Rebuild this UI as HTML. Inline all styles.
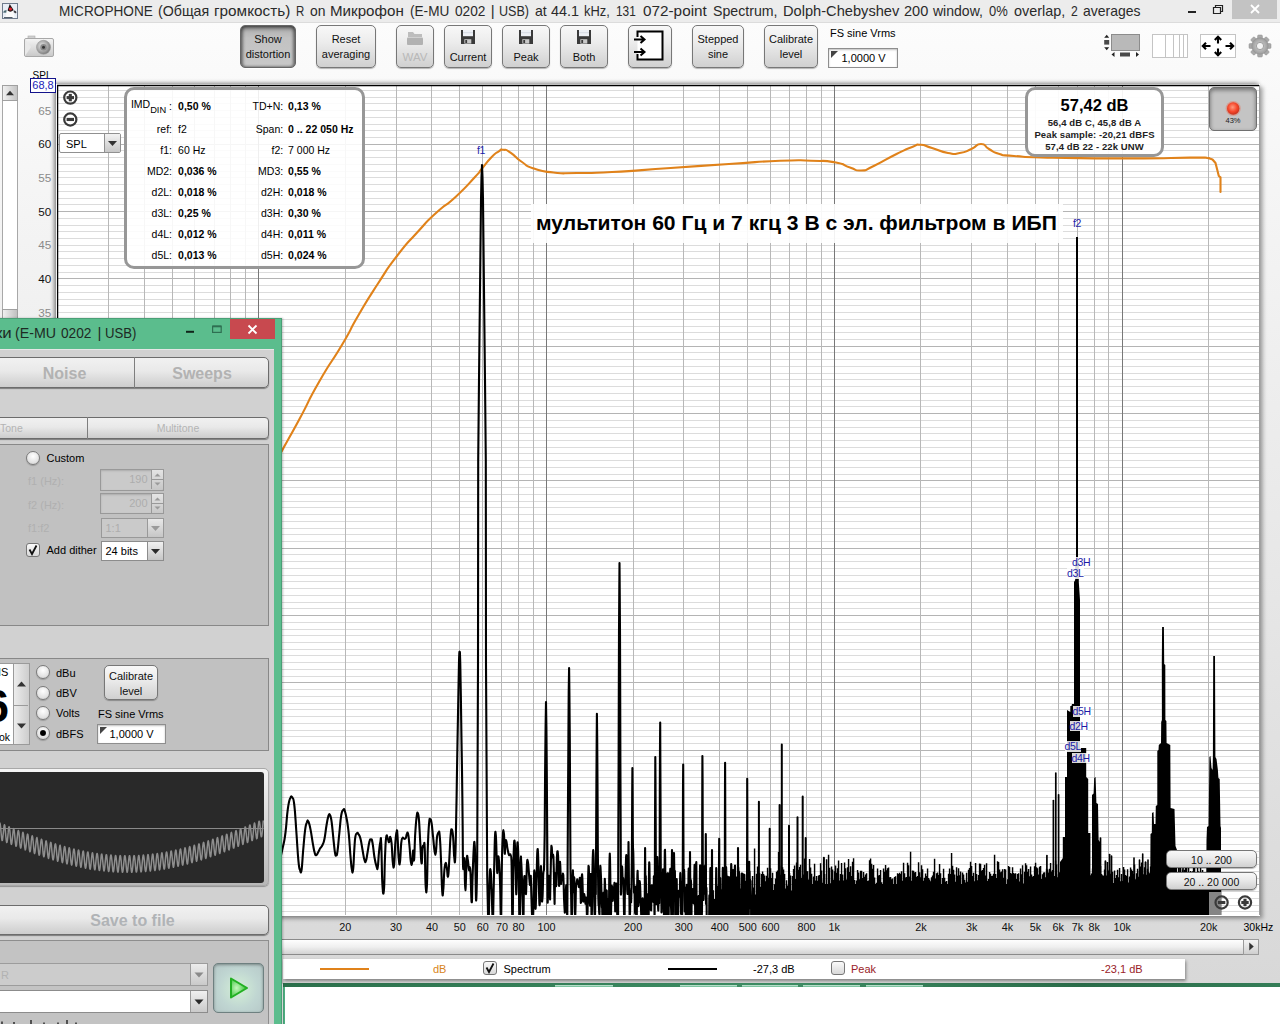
<!DOCTYPE html>
<html><head><meta charset="utf-8"><title>REW</title><style>
*{box-sizing:border-box;margin:0;padding:0}
html,body{width:1280px;height:1024px;overflow:hidden;background:#fff}
body{font-family:"Liberation Sans",sans-serif;font-size:12px;color:#000;position:relative}
div{position:absolute}
.t{white-space:nowrap;line-height:1}
.btn{border:1px solid #777;border-radius:5px;background:linear-gradient(#f8f8f8,#ececec 40%,#dedede 70%,#d0d0d0);box-shadow:0 1px 1px rgba(0,0,0,.28);text-align:center;font-size:11px;line-height:15px;color:#111}
.btn.sel{background:linear-gradient(#adadad,#c2c2c2 30%,#c8c8c8);border-color:#666;box-shadow:inset 0 2px 4px rgba(0,0,0,.55),inset 2px 0 3px rgba(0,0,0,.28),inset -2px 0 3px rgba(0,0,0,.28),0 1px 0 rgba(255,255,255,.9)}
.btn.dis{color:#b8b8b8}
.bl{position:absolute;left:0;right:0;text-align:center;white-space:nowrap}
.rad{width:14px;height:14px;border-radius:50%;border:1px solid #7a7a7a;background:radial-gradient(circle at 50% 35%,#fff,#e4e4e4 60%,#cfcfcf);box-shadow:0 1px 1px rgba(0,0,0,.2)}
.chk{width:14px;height:14px;border-radius:3px;border:1px solid #777;background:linear-gradient(#fafafa,#d8d8d8)}
.field{background:#fff;border:1px solid #8e8e8e;box-shadow:inset 0 1px 2px rgba(0,0,0,.25)}
.combo{border:1px solid #909090;border-radius:2px;background:#fff}
.cbtn{border-left:1px solid #909090;background:linear-gradient(#f2f2f2,#c8c8c8)}
.yl{right:1228.7px;font-size:11.7px}
.xl{font-size:10.8px;transform:translateX(-50%);top:922.8px;color:#111}
.lab{font-size:10.5px;color:#1c1ca8;letter-spacing:-0.3px}
</style></head><body><div style="left:0px;top:22px;width:1280px;height:962px;background:linear-gradient(#fcfcfc,#f4f4f4 20%,#e6e6e6 60%,#d8d8d8)"></div>
<div style="left:0px;top:0px;width:1280px;height:22.5px;background:#ececec;border-bottom:1px solid #dcdcdc"></div>
<div class="t" style="left:58.75px;top:3.2px;font-size:15px;color:#2a2a2a;transform-origin:0 0;transform:scaleX(0.9076)">MICROPHONE</div>
<div class="t" style="left:157.5px;top:3.2px;font-size:15px;color:#2a2a2a;transform-origin:0 0;transform:scaleX(0.9473)">(Общая</div>
<div class="t" style="left:213.75px;top:3.2px;font-size:15px;color:#2a2a2a;transform-origin:0 0;transform:scaleX(1.0207)">громкость)</div>
<div class="t" style="left:296.25px;top:3.2px;font-size:15px;color:#2a2a2a;transform-origin:0 0;transform:scaleX(0.7639)">R</div>
<div class="t" style="left:309.5px;top:3.2px;font-size:15px;color:#2a2a2a;transform-origin:0 0;transform:scaleX(0.9281)">on</div>
<div class="t" style="left:330px;top:3.2px;font-size:15px;color:#2a2a2a;transform-origin:0 0;transform:scaleX(1.0089)">Микрофон</div>
<div class="t" style="left:409.5px;top:3.2px;font-size:15px;color:#2a2a2a;transform-origin:0 0;transform:scaleX(0.9065)">(E-MU</div>
<div class="t" style="left:454.5px;top:3.2px;font-size:15px;color:#2a2a2a;transform-origin:0 0;transform:scaleX(0.9132)">0202</div>
<div class="t" style="left:490.7px;top:3.2px;font-size:15px;color:#2a2a2a;transform-origin:0 0;transform:scaleX(1)">|</div>
<div class="t" style="left:498.75px;top:3.2px;font-size:15px;color:#2a2a2a;transform-origin:0 0;transform:scaleX(0.838)">USB)</div>
<div class="t" style="left:534.5px;top:3.2px;font-size:15px;color:#2a2a2a;transform-origin:0 0;transform:scaleX(0.94)">at</div>
<div class="t" style="left:551.25px;top:3.2px;font-size:15px;color:#2a2a2a;transform-origin:0 0;transform:scaleX(0.9589)">44.1</div>
<div class="t" style="left:584.25px;top:3.2px;font-size:15px;color:#2a2a2a;transform-origin:0 0;transform:scaleX(0.8583)">kHz,</div>
<div class="t" style="left:615.75px;top:3.2px;font-size:15px;color:#2a2a2a;transform-origin:0 0;transform:scaleX(0.79)">131</div>
<div class="t" style="left:642.5px;top:3.2px;font-size:15px;color:#2a2a2a;transform-origin:0 0;transform:scaleX(1.02)">072-point</div>
<div class="t" style="left:712.5px;top:3.2px;font-size:15px;color:#2a2a2a;transform-origin:0 0;transform:scaleX(0.943)">Spectrum,</div>
<div class="t" style="left:782.5px;top:3.2px;font-size:15px;color:#2a2a2a;transform-origin:0 0;transform:scaleX(0.9753)">Dolph-Chebyshev</div>
<div class="t" style="left:903.75px;top:3.2px;font-size:15px;color:#2a2a2a;transform-origin:0 0;transform:scaleX(0.97)">200</div>
<div class="t" style="left:933.09px;top:3.2px;font-size:15px;color:#2a2a2a;transform-origin:0 0;transform:scaleX(0.9346)">window,</div>
<div class="t" style="left:989.25px;top:3.2px;font-size:15px;color:#2a2a2a;transform-origin:0 0;transform:scaleX(0.8641)">0%</div>
<div class="t" style="left:1013.75px;top:3.2px;font-size:15px;color:#2a2a2a;transform-origin:0 0;transform:scaleX(0.9597)">overlap,</div>
<div class="t" style="left:1070.75px;top:3.2px;font-size:15px;color:#2a2a2a;transform-origin:0 0;transform:scaleX(0.8133)">2</div>
<div class="t" style="left:1083px;top:3.2px;font-size:15px;color:#2a2a2a;transform-origin:0 0;transform:scaleX(0.9319)">averages</div>
<div style="left:1232px;top:0px;width:45px;height:19px;background:#c3c3c3"></div>
<div style="left:0px;top:984px;width:1280px;height:40px;background:#fff"></div>
<div style="left:283px;top:983px;width:997px;height:4px;background:linear-gradient(90deg,#2b6f4b,#37835b 30%,#3f8e65 50%,#2a6c49 80%,#347d57)"></div>
<div style="left:555px;top:985px;width:58px;height:2px;background:#7dc3a0;border-top:1px solid #b5dcc8"></div>
<div style="left:680px;top:985px;width:57px;height:2px;background:#7dc3a0;border-top:1px solid #b5dcc8"></div>
<div style="left:742px;top:985px;width:56px;height:2px;background:#7dc3a0;border-top:1px solid #b5dcc8"></div>
<div style="left:803px;top:985px;width:57px;height:2px;background:#7dc3a0;border-top:1px solid #b5dcc8"></div>
<div style="left:866px;top:985px;width:57px;height:2px;background:#7dc3a0;border-top:1px solid #b5dcc8"></div>
<div style="left:283px;top:987px;width:2px;height:37px;background:#4fae82"></div>
<svg style="position:absolute;left:0;top:0" width="1280" height="1024" viewBox="0 0 1280 1024"><rect x="2.5" y="3.5" width="15" height="15" fill="#e9eef5" stroke="#6f7b8c"/><path d="M3.5 11.5Q5 9.5 7 10.5L6.5 13Q5 12 3.5 13Z" fill="#4a6a72"/><path d="M13.5 10.5Q15.5 10 16.5 12L16 13.5Q15 12.5 13.5 12.5Z" fill="#3a3a40"/><path d="M6.7 10.5H13.3L14.5 17.5H5.5Z" fill="#fbfbfb"/><path d="M9.7 4L13.6 10Q10.5 13 7.6 10.6Z" fill="#1e1416"/><circle cx="10.4" cy="9" r="1.6" fill="#e0202c"/><path d="M4 17H12L13 18H4Z" fill="#55606c"/><path d="M1188 12H1196" stroke="#222" stroke-width="2"/><path d="M1213.5 7.5H1220.5V13.5H1213.5Z M1215.5 7.5V5.5H1222.5V11.5H1220.5" stroke="#222" stroke-width="1.2" fill="none"/><path d="M1251 5L1259 13M1259 5L1251 13" stroke="#fff" stroke-width="1.8"/><defs><linearGradient id="cg" x1="0" y1="0" x2="0" y2="1"><stop offset="0" stop-color="#f4f4f4"/><stop offset="1" stop-color="#c9c9c9"/></linearGradient><radialGradient id="lens" cx="0.4" cy="0.4" r="0.7"><stop offset="0" stop-color="#e8e8e8"/><stop offset="0.55" stop-color="#a8a8a8"/><stop offset="1" stop-color="#6a6a6a"/></radialGradient><radialGradient id="red" cx="0.45" cy="0.4" r="0.6"><stop offset="0" stop-color="#ff9a80"/><stop offset="0.6" stop-color="#f6482c"/><stop offset="1" stop-color="#c8321c"/></radialGradient><radialGradient id="gear" cx="0.5" cy="0.5" r="0.5"><stop offset="0" stop-color="#d8d8d8"/><stop offset="1" stop-color="#9c9c9c"/></radialGradient></defs><rect x="28" y="36" width="7" height="3" fill="#d0d0d0" stroke="#aaa" stroke-width=".6"/><rect x="24.5" y="38.5" width="29" height="18" rx="1.5" fill="url(#cg)" stroke="#a8a8a8"/><path d="M25 39L31 47L25 56Z" fill="#e9e9e9"/><circle cx="43.5" cy="47.3" r="7" fill="url(#lens)" stroke="#999" stroke-width=".6"/><circle cx="43.5" cy="47.3" r="3.2" fill="#8a8a8a"/><circle cx="43.5" cy="47.3" r="1.5" fill="#333"/><rect x="1111.5" y="34.5" width="28" height="16" fill="#b9b9b9" stroke="#8c8c8c"/><rect x="1104.2" y="40" width="5" height="4.6" fill="#4a4a4a"/><polygon points="1104.2,37.8 1109.2,37.8 1106.7,34.8" fill="#222"/><polygon points="1104.2,47.2 1109.2,47.2 1106.7,50.2" fill="#222"/><rect x="1120" y="52.5" width="10" height="4" fill="#4a4a4a"/><polygon points="1114.5,52 1114.5,57 1111.5,54.5" fill="#222"/><polygon points="1136,52 1136,57 1139,54.5" fill="#222"/><rect x="1152.5" y="34.5" width="35" height="23" fill="#fff" stroke="#c4c4c4"/><path d="M1165.5 35V57M1173.5 35V57M1179.5 35V57M1183.5 35V57" stroke="#c4c4c4"/><rect x="1200.5" y="34.5" width="35" height="23" fill="#fff" stroke="#c4c4c4"/><path d="M1203 46H1210.5M1225.5 46H1233M1218 37V43.5M1218 48.5V55" stroke="#000" stroke-width="2.1"/><path d="M1206 42.8L1202.8 46L1206 49.2M1230 42.8L1233.2 46L1230 49.2M1214.8 40L1218 36.8L1221.2 40M1214.8 52L1218 55.2L1221.2 52" stroke="#000" stroke-width="2.1" fill="none"/><g transform="translate(1260,46)"><rect x="-2.4" y="-11" width="4.8" height="6" rx="1" fill="#a9a9a9" stroke="#8f8f8f" stroke-width=".5" transform="rotate(0)"/><rect x="-2.4" y="-11" width="4.8" height="6" rx="1" fill="#a9a9a9" stroke="#8f8f8f" stroke-width=".5" transform="rotate(45)"/><rect x="-2.4" y="-11" width="4.8" height="6" rx="1" fill="#a9a9a9" stroke="#8f8f8f" stroke-width=".5" transform="rotate(90)"/><rect x="-2.4" y="-11" width="4.8" height="6" rx="1" fill="#a9a9a9" stroke="#8f8f8f" stroke-width=".5" transform="rotate(135)"/><rect x="-2.4" y="-11" width="4.8" height="6" rx="1" fill="#a9a9a9" stroke="#8f8f8f" stroke-width=".5" transform="rotate(180)"/><rect x="-2.4" y="-11" width="4.8" height="6" rx="1" fill="#a9a9a9" stroke="#8f8f8f" stroke-width=".5" transform="rotate(225)"/><rect x="-2.4" y="-11" width="4.8" height="6" rx="1" fill="#a9a9a9" stroke="#8f8f8f" stroke-width=".5" transform="rotate(270)"/><rect x="-2.4" y="-11" width="4.8" height="6" rx="1" fill="#a9a9a9" stroke="#8f8f8f" stroke-width=".5" transform="rotate(315)"/><circle r="8.2" fill="url(#gear)" stroke="#909090" stroke-width=".6"/><circle r="3.6" fill="#f4f4f4" stroke="#909090" stroke-width=".8"/></g></svg>
<div class="btn sel" style="left:240px;top:25.2px;width:56px;height:42.6px;"><div class="bl" style="top:5.9px">Show</div><div class="bl" style="top:20.9px">distortion</div></div>
<div class="btn" style="left:316px;top:25.2px;width:60px;height:42.6px;"><div class="bl" style="top:5.9px">Reset</div><div class="bl" style="top:20.9px">averaging</div></div>
<div class="btn dis" style="left:396px;top:25.2px;width:38px;height:42.6px;"><div class="bl" style="top:23.7px;font-size:11.5px">WAV</div></div>
<div class="btn" style="left:444px;top:25.2px;width:48px;height:42.6px;"><div class="bl" style="top:23.7px">Current</div></div>
<div class="btn" style="left:502px;top:25.2px;width:48px;height:42.6px;"><div class="bl" style="top:23.7px">Peak</div></div>
<div class="btn" style="left:560px;top:25.2px;width:48px;height:42.6px;"><div class="bl" style="top:23.7px">Both</div></div>
<div class="btn" style="left:628px;top:25.2px;width:44px;height:42.6px;"></div>
<div class="btn" style="left:692px;top:25.2px;width:52px;height:42.6px;"><div class="bl" style="top:5.9px">Stepped</div><div class="bl" style="top:20.9px">sine</div></div>
<div class="btn" style="left:764px;top:25.2px;width:54px;height:42.6px;"><div class="bl" style="top:5.9px">Calibrate</div><div class="bl" style="top:20.9px">level</div></div>
<svg style="position:absolute;left:0;top:0" width="1280" height="1024" viewBox="0 0 1280 1024"><g transform="translate(461,30)"><path d="M0 0H14V14H0Z" fill="#3a3a3a"/><rect x="2" y="0" width="10" height="6.2" fill="#eef1f6"/><rect x="2" y="2.2" width="10" height="1" fill="#d5dae3"/><rect x="3.3" y="9.2" width="7" height="4.4" fill="#c9c9c9"/><rect x="4.3" y="10" width="1.8" height="3" fill="#3a3a3a"/></g><g transform="translate(519,30)"><path d="M0 0H14V14H0Z" fill="#3a3a3a"/><rect x="2" y="0" width="10" height="6.2" fill="#eef1f6"/><rect x="2" y="2.2" width="10" height="1" fill="#d5dae3"/><rect x="3.3" y="9.2" width="7" height="4.4" fill="#c9c9c9"/><rect x="4.3" y="10" width="1.8" height="3" fill="#3a3a3a"/></g><g transform="translate(577,30)"><path d="M0 0H14V14H0Z" fill="#3a3a3a"/><rect x="2" y="0" width="10" height="6.2" fill="#eef1f6"/><rect x="2" y="2.2" width="10" height="1" fill="#d5dae3"/><rect x="3.3" y="9.2" width="7" height="4.4" fill="#c9c9c9"/><rect x="4.3" y="10" width="1.8" height="3" fill="#3a3a3a"/></g><path d="M408 32H413L414.5 34H422V37H408Z" fill="#bdbdbd"/><rect x="407" y="37.5" width="16" height="7.5" rx="1" fill="#b2b2b2"/><rect x="637.5" y="31.5" width="25" height="28" fill="#fff"/><path d="M637.5 37V31.5H662.5V59.5H637.5V54" stroke="#000" stroke-width="2" fill="none"/><path d="M634 39.5H644M634 52H644M640.5 36L644.5 39.5L640.5 43M640.5 48.5L644.5 52L640.5 55.5" stroke="#000" stroke-width="2" fill="none"/></svg>
<div class="t" style="left:830px;top:27.5px;font-size:11px">FS sine Vrms</div>
<div class="field" style="left:828px;top:47.5px;width:70px;height:20.5px;"><svg width="8" height="8" style="position:absolute;left:2px;top:2px"><path d="M0 0H7L0 7Z" fill="#444"/></svg><div class="t" style="left:12.5px;top:4.5px;font-size:11px">1,0000 V</div></div>
<div style="left:2px;top:85px;width:16px;height:240px;background:#fff;border:1px solid #a8a8a8"></div>
<div style="left:2px;top:85px;width:16px;height:16px;background:linear-gradient(90deg,#f0f0f0,#c4c4c4);border:1px solid #a0a0a0"><svg width="14" height="14"><polygon points="3,9.25 11,9.25 7,4.75" fill="#333"/></svg></div>
<div style="left:2px;top:309px;width:16px;height:12px;background:linear-gradient(90deg,#f0f0f0,#c0c0c0);border:1px solid #a0a0a0"></div>
<div class="t yl" style="left:0px;top:104.685px;left:auto;color:#8a8a8a">65</div>
<div class="t yl" style="left:0px;top:138.35px;left:auto;color:#111">60</div>
<div class="t yl" style="left:0px;top:172.015px;left:auto;color:#8a8a8a">55</div>
<div class="t yl" style="left:0px;top:205.68px;left:auto;color:#111">50</div>
<div class="t yl" style="left:0px;top:239.345px;left:auto;color:#8a8a8a">45</div>
<div class="t yl" style="left:0px;top:273.01px;left:auto;color:#111">40</div>
<div class="t yl" style="left:0px;top:306.675px;left:auto;color:#8a8a8a">35</div>
<div class="t" style="left:32.6px;top:70.6px;font-size:10px">SPL</div>
<div style="left:56px;top:84px;width:1204px;height:832px;background:#fff;box-shadow:-2px -1px 4px rgba(0,0,0,.45),3px 3px 4px rgba(0,0,0,.3)"></div>
<svg style="position:absolute;left:0;top:0" width="1280" height="1024" viewBox="0 0 1280 1024"><path d="M57 90.5H1259M57 97.5H1259M57 103.5H1259M57 110.5H1259M57 117.5H1259M57 124.5H1259M57 130.5H1259M57 137.5H1259M57 150.5H1259M57 157.5H1259M57 164.5H1259M57 171.5H1259M57 177.5H1259M57 184.5H1259M57 191.5H1259M57 198.5H1259M57 204.5H1259M57 218.5H1259M57 225.5H1259M57 231.5H1259M57 238.5H1259M57 245.5H1259M57 251.5H1259M57 258.5H1259M57 265.5H1259M57 272.5H1259M57 285.5H1259M57 292.5H1259M57 299.5H1259M57 305.5H1259M57 312.5H1259M57 319.5H1259M57 326.5H1259M57 332.5H1259M57 339.5H1259M57 352.5H1259M57 359.5H1259M57 366.5H1259M57 373.5H1259M57 379.5H1259M57 386.5H1259M57 393.5H1259M57 400.5H1259M57 406.5H1259M57 420.5H1259M57 427.5H1259M57 433.5H1259M57 440.5H1259M57 447.5H1259M57 453.5H1259M57 460.5H1259M57 467.5H1259M57 474.5H1259M57 487.5H1259M57 494.5H1259M57 501.5H1259M57 507.5H1259M57 514.5H1259M57 521.5H1259M57 528.5H1259M57 534.5H1259M57 541.5H1259M57 554.5H1259M57 561.5H1259M57 568.5H1259M57 575.5H1259M57 581.5H1259M57 588.5H1259M57 595.5H1259M57 602.5H1259M57 608.5H1259M57 622.5H1259M57 629.5H1259M57 635.5H1259M57 642.5H1259M57 649.5H1259M57 655.5H1259M57 662.5H1259M57 669.5H1259M57 676.5H1259M57 689.5H1259M57 696.5H1259M57 703.5H1259M57 709.5H1259M57 716.5H1259M57 723.5H1259M57 730.5H1259M57 736.5H1259M57 743.5H1259M57 756.5H1259M57 763.5H1259M57 770.5H1259M57 777.5H1259M57 783.5H1259M57 790.5H1259M57 797.5H1259M57 804.5H1259M57 810.5H1259M57 824.5H1259M57 831.5H1259M57 837.5H1259M57 844.5H1259M57 851.5H1259M57 857.5H1259M57 864.5H1259M57 871.5H1259M57 878.5H1259M57 891.5H1259M57 898.5H1259M57 905.5H1259M57 911.5H1259" stroke="#dcdcdc" stroke-width="1" fill="none"/>
<path d="M57 144.5H1259M57 211.5H1259M57 278.5H1259M57 346.5H1259M57 413.5H1259M57 480.5H1259M57 548.5H1259M57 615.5H1259M57 682.5H1259M57 750.5H1259M57 817.5H1259M57 884.5H1259" stroke="#b4b4b4" stroke-width="1" fill="none"/>
<path d="M108.5 85V915M144.5 85V915M172.5 85V915M194.5 85V915M214.5 85V915M230.5 85V915M245.5 85V915M345.5 85V915M396.5 85V915M431.5 85V915M459.5 85V915M482.5 85V915M501.5 85V915M518.5 85V915M533.5 85V915M633.5 85V915M683.5 85V915M719.5 85V915M747.5 85V915M770.5 85V915M789.5 85V915M806.5 85V915M821.5 85V915M920.5 85V915M971.5 85V915M1007.5 85V915M1035.5 85V915M1058.5 85V915M1077.5 85V915M1094.5 85V915M1108.5 85V915M1208.5 85V915" stroke="#b8b8b8" stroke-width="1" fill="none"/>
<path d="M258.5 85V915M546.5 85V915M834.5 85V915M1122.5 85V915" stroke="#787878" stroke-width="1" fill="none"/><path d="M57 85.5H1259" stroke="#000" stroke-width="1.4"/><path d="M57.6 85V915" stroke="#000" stroke-width="1.3"/><path d="M1259.5 85V915" stroke="#a0a0a0"/><clipPath id="pc"><rect x="57" y="85" width="1202" height="830"/></clipPath><g clip-path="url(#pc)"><path d="M270.0 475.0C273.3 468.2 270.2 473.2 280.0 454.5C289.8 435.8 286.5 443.2 299.5 419.0C312.5 394.8 304.7 407.0 319.0 382.0C333.3 357.0 329.5 366.0 342.5 344.0C355.5 322.0 346.3 336.0 358.0 316.0C369.7 296.0 364.7 304.0 377.7 284.0C390.7 264.0 384.0 273.0 397.0 256.0C410.0 239.0 403.7 247.3 416.7 233.0C429.7 218.7 423.0 225.1 436.0 213.0C449.0 200.9 442.8 208.7 455.8 196.7C468.8 184.7 466.4 186.2 475.0 177.0C483.6 167.8 476.3 175.4 481.6 169.0C486.9 162.6 485.3 163.6 491.0 157.7C496.7 151.8 494.7 153.9 498.8 151.3C502.9 148.7 499.5 149.4 503.4 149.8C507.3 150.2 504.3 148.5 510.5 152.6C516.7 156.7 514.2 156.7 522.0 162.0C529.8 167.3 523.5 165.1 534.0 168.6C544.5 172.1 539.1 171.0 553.4 172.5C567.7 174.0 557.5 173.2 577.0 173.0C596.5 172.8 580.8 173.7 612.0 172.0C643.2 170.3 631.6 170.7 670.6 168.0C709.6 165.3 692.5 166.4 729.0 164.0C765.5 161.6 752.7 161.9 780.0 160.8C807.3 159.7 792.8 160.3 811.0 160.8C829.2 161.3 821.7 160.1 834.7 162.3C847.7 164.5 841.2 164.7 850.0 167.4C858.8 170.1 853.1 171.0 861.0 170.5C868.9 170.0 861.7 171.6 873.7 166.0C885.7 160.4 884.0 160.1 897.0 153.7C910.0 147.3 904.9 149.7 912.8 146.7C920.7 143.7 914.2 144.4 920.6 144.8C927.0 145.2 922.9 145.3 932.0 148.0C941.1 150.7 938.8 151.3 948.0 153.0C957.2 154.7 951.9 154.3 959.7 153.0C967.5 151.7 964.3 152.0 971.4 149.0C978.5 146.0 975.1 144.0 981.0 144.0C986.9 144.0 983.1 145.8 989.0 149.0C994.9 152.2 990.4 151.4 998.7 153.7C1007.0 156.0 995.9 154.7 1014.0 156.0C1032.1 157.3 1013.8 156.8 1053.0 157.6C1092.2 158.4 1085.8 158.4 1131.5 158.4C1177.2 158.4 1164.2 157.7 1190.0 157.6C1215.8 157.5 1202.7 158.0 1209.0 158.2" stroke="#e0821a" stroke-width="2.1" fill="none" stroke-linecap="round" stroke-linejoin="round"/><path d="M1209.0 158.2L1212.5 159.5L1215.5 163.0L1217.3 170.0L1218.8 176.0L1220.5 177.4L1220.5 192.0" stroke="#e0821a" stroke-width="2.1" fill="none" stroke-linecap="round" stroke-linejoin="round"/><path d="M272.0 880.0C273.2 877.5 274.3 878.2 277.0 870.0C279.7 861.8 280.7 856.7 282.8 847.3C284.9 838.0 284.2 842.1 285.5 832.5C286.7 822.9 286.6 817.7 287.8 809.1C289.0 800.5 289.0 800.9 290.2 798.1C291.3 795.3 291.4 795.9 292.5 797.8C293.6 799.8 293.4 797.3 294.4 805.9C295.4 814.6 295.4 818.8 296.4 832.5C297.4 846.2 297.5 851.2 298.4 860.6C299.3 870.0 299.2 867.7 300.0 870.0C300.8 872.3 300.8 874.4 301.6 869.7C302.3 865.0 302.3 860.9 303.1 851.2C304.0 841.6 304.1 838.2 305.0 830.9C305.9 823.7 306.0 824.7 306.9 822.3C307.7 820.0 307.5 819.8 308.4 821.6C309.3 823.3 309.4 823.9 310.5 829.4C311.6 834.8 311.8 837.6 312.8 843.4C313.9 849.3 313.8 849.9 314.7 852.8C315.5 855.7 315.4 855.4 316.2 855.2C317.1 855.0 317.3 853.8 318.3 852.0C319.3 850.3 319.3 849.9 320.3 848.1C321.4 846.4 321.4 847.3 322.5 845.0C323.6 842.7 323.5 843.8 324.5 838.8C325.5 833.7 325.6 830.4 326.6 824.7C327.5 819.0 327.6 818.5 328.4 816.1C329.3 813.7 329.2 813.6 330.0 815.0C330.8 816.4 330.7 815.6 331.6 821.6C332.4 827.5 332.6 830.9 333.4 838.8C334.3 846.6 334.3 848.7 335.0 852.8C335.7 856.9 335.6 855.5 336.2 855.2C336.9 854.8 336.7 856.9 337.5 851.2C338.3 845.6 338.4 841.5 339.4 832.5C340.3 823.5 340.3 821.0 341.2 815.3C342.2 809.6 342.4 810.9 343.3 809.8C344.2 808.8 343.9 808.4 344.8 810.9C345.7 813.5 345.9 814.2 346.9 820.0C347.9 825.8 347.8 824.7 348.8 834.1C349.7 843.4 349.8 848.6 350.6 857.5C351.4 866.4 351.2 866.6 351.9 869.7C352.5 872.7 352.5 874.3 353.1 869.7C353.7 865.1 353.7 859.4 354.2 851.2C354.8 843.1 354.6 841.7 355.3 837.2C356.0 832.7 356.1 834.1 356.9 833.3C357.7 832.5 357.5 832.7 358.4 834.1C359.3 835.4 359.5 834.8 360.5 838.8C361.5 842.7 361.5 844.4 362.5 849.7C363.5 855.0 363.5 857.0 364.4 859.8C365.2 862.7 365.2 862.7 365.9 860.9C366.7 859.2 366.6 857.6 367.5 852.8C368.4 848.0 368.5 845.2 369.4 841.9C370.2 838.6 370.2 839.3 370.9 839.5C371.7 839.7 371.6 838.2 372.5 842.7C373.4 847.1 373.5 851.5 374.5 857.5C375.5 863.5 375.7 864.2 376.6 866.6C377.4 868.9 377.2 870.7 377.8 866.9C378.4 863.0 378.4 857.4 379.1 851.2C379.7 845.1 379.8 844.1 380.3 842.2C380.9 840.2 380.7 833.4 381.2 843.4C381.8 853.5 381.7 870.8 382.3 882.5C383.0 894.2 383.2 896.6 383.9 890.3C384.6 884.1 384.4 870.8 385.0 857.5C385.6 844.2 385.5 841.9 386.2 837.2C387.0 832.5 387.1 837.5 387.8 838.8C388.5 840.0 388.4 842.7 389.1 842.2C389.7 841.7 389.7 836.6 390.3 836.9C390.9 837.2 390.9 837.1 391.6 843.4C392.2 849.8 392.2 856.8 392.8 862.2C393.4 867.6 393.4 869.7 394.1 865.0C394.7 860.3 394.7 851.8 395.3 843.4C395.9 835.1 396.0 833.7 396.6 831.7C397.1 829.8 397.0 828.8 397.5 835.6C398.0 842.5 398.1 852.5 398.8 859.1C399.4 865.6 399.4 865.8 400.0 861.9C400.6 858.0 400.6 849.4 401.2 843.4C401.9 837.5 401.8 839.1 402.5 838.0C403.2 836.8 403.4 838.8 404.2 838.8C405.0 838.8 405.1 839.2 405.8 838.0C406.4 836.7 406.3 834.7 406.9 833.8C407.5 832.8 407.5 831.2 408.1 834.1C408.8 836.9 408.7 838.0 409.4 845.0C410.1 852.0 410.2 857.9 410.9 862.2C411.6 866.5 411.6 865.1 412.2 862.2C412.7 859.3 412.7 851.1 413.1 850.5C413.6 849.9 413.5 864.3 414.1 859.8C414.6 855.4 414.6 843.4 415.3 832.5C416.0 821.6 416.1 820.8 416.7 816.1C417.4 811.4 417.4 812.4 418.0 813.8C418.6 815.1 418.5 814.1 419.1 821.6C419.6 829.0 419.7 833.0 420.3 843.4C420.9 853.9 421.0 862.3 421.6 863.4C422.1 864.6 422.0 852.3 422.5 848.1C423.0 843.9 423.2 846.8 423.8 846.6C424.3 846.4 424.2 837.8 424.7 847.3C425.2 856.9 425.1 875.2 425.6 884.8C426.2 894.5 426.3 895.1 426.9 885.9C427.4 876.8 427.3 863.8 427.8 848.1C428.4 832.4 428.4 830.2 429.1 823.1C429.7 816.0 429.7 819.7 430.3 819.7C430.9 819.7 430.9 818.8 431.6 823.1C432.3 827.5 432.3 830.0 433.1 837.2C433.9 844.4 434.0 848.3 434.7 852.0C435.4 855.7 435.4 855.7 435.9 852.0C436.5 848.3 436.4 842.1 437.0 837.2C437.7 832.3 437.9 832.9 438.6 832.5C439.3 832.1 439.1 829.4 439.7 835.6C440.3 841.9 440.3 843.6 440.9 857.5C441.6 871.4 441.6 883.1 442.2 891.1C442.8 899.1 442.7 894.8 443.3 889.5C443.8 884.3 443.8 876.6 444.4 870.0C445.0 863.4 445.0 863.4 445.6 863.0C446.2 862.6 446.2 865.1 446.9 868.4C447.5 871.8 447.5 879.0 448.1 876.2C448.8 873.5 448.8 867.7 449.4 857.5C450.0 847.3 450.0 842.7 450.6 835.6C451.2 828.6 451.2 829.0 451.9 829.4C452.5 829.8 452.5 830.4 453.1 837.2C453.7 844.0 453.7 851.8 454.2 856.7C454.8 861.6 454.8 866.6 455.3 856.7C455.8 846.8 455.8 838.7 456.2 817.0C456.7 795.3 456.6 794.2 457.0 770.0C457.4 745.8 457.5 742.0 457.9 720.0C458.3 698.0 458.3 697.5 458.6 682.0C458.9 666.5 458.9 665.5 459.1 658.0C459.4 650.5 459.4 652.0 459.6 652.0C459.9 652.0 459.9 650.5 460.1 658.0C460.4 665.5 460.3 666.5 460.6 682.0C460.9 697.5 460.9 698.0 461.2 720.0C461.5 742.0 461.6 745.0 462.0 770.0C462.4 795.0 462.3 795.8 462.6 820.0C462.9 844.2 462.7 857.1 463.1 866.9C463.6 876.6 463.8 853.1 464.4 859.0C464.9 864.9 464.7 890.1 465.3 890.3C465.9 890.5 466.1 867.4 466.7 859.8C467.3 852.2 467.2 857.2 467.8 859.8C468.4 862.3 468.4 867.5 469.0 870.0C469.6 872.5 469.6 862.0 470.3 870.0C471.0 878.0 471.1 899.6 471.6 902.0C472.2 904.4 472.0 892.9 472.5 879.4C473.0 865.9 473.2 856.6 473.8 848.0C474.3 839.4 474.3 841.1 474.7 845.0C475.1 848.9 474.9 849.9 475.3 863.8C475.7 877.6 475.8 901.4 476.2 900.5C476.7 899.6 477.0 870.1 477.2 860.0L478.0 665.0L478.2 460.0L479.0 380.0L479.9 300.0L481.0 200.0L481.5 177.0L482.0 165.0L482.5 177.0L483.0 200.0L484.1 300.0L485.0 380.0L485.8 460.0L486.0 665.0L487.2 875.0C487.4 883.5 487.8 909.0 488.1 917.5C488.4 926.0 488.4 926.0 488.8 917.5C489.1 909.0 489.4 884.1 489.8 875.0C490.1 865.9 490.4 869.4 490.8 871.9C491.1 874.4 491.1 878.4 491.5 887.5C491.9 896.6 492.2 911.5 492.5 917.5C492.8 923.5 492.8 926.0 493.1 917.5C493.4 909.0 493.6 891.2 494.0 875.0C494.4 858.8 494.6 844.0 495.0 836.2C495.4 828.5 495.6 832.2 495.9 836.2C496.2 840.2 496.4 848.9 496.6 856.2C496.9 863.6 497.0 872.9 497.2 873.1C497.5 873.4 497.6 859.9 498.0 857.5C498.4 855.1 498.6 856.5 499.0 861.2C499.4 866.0 499.6 870.0 500.0 881.2C500.4 892.5 500.5 910.2 500.8 917.5C501.0 924.8 501.0 928.5 501.2 917.5C501.5 906.5 501.6 878.5 501.9 862.5C502.2 846.5 502.4 844.0 502.8 837.5C503.1 831.0 503.2 830.0 503.5 830.0C503.8 830.0 504.0 832.8 504.2 837.5C504.5 842.2 504.5 853.0 504.8 853.8C505.0 854.5 505.1 843.6 505.5 841.2C505.9 838.9 506.1 840.4 506.5 841.9C506.9 843.4 507.0 846.1 507.5 848.8C508.0 851.4 508.4 853.8 509.0 855.0C509.6 856.2 510.1 853.0 510.6 855.0C511.1 857.0 511.3 852.5 511.6 865.0C511.9 877.5 512.0 907.0 512.2 917.5C512.5 928.0 512.5 926.0 512.8 917.5C513.0 909.0 513.0 888.5 513.2 875.0C513.5 861.5 513.5 856.9 513.8 850.0C514.0 843.1 514.2 840.1 514.5 840.6C514.8 841.1 515.0 843.1 515.2 852.5C515.5 861.9 515.8 880.1 516.0 887.5C516.2 894.9 516.2 897.4 516.5 889.4C516.8 881.4 517.0 855.9 517.2 847.5C517.5 839.1 517.7 842.0 518.0 847.5C518.3 853.0 518.5 861.0 518.8 875.0C519.0 889.0 519.1 909.0 519.4 917.5C519.6 926.0 519.8 928.5 520.0 917.5C520.2 906.5 520.4 873.6 520.6 862.5C520.9 851.4 521.0 858.4 521.2 861.9C521.5 865.4 521.6 868.9 522.0 880.0C522.4 891.1 522.8 910.0 523.1 917.5C523.4 925.0 523.3 924.5 523.5 917.5C523.7 910.5 523.7 890.5 524.0 882.5C524.3 874.5 524.6 875.2 525.0 877.5C525.4 879.8 525.6 896.6 526.0 893.8C526.4 890.9 526.6 869.2 527.0 863.1C527.4 857.0 527.7 861.0 528.1 863.1C528.5 865.2 528.6 869.4 529.0 873.8C529.4 878.1 529.6 884.5 530.0 885.0C530.4 885.5 530.5 873.2 530.8 876.2C531.0 879.2 531.2 891.8 531.5 900.0C531.8 908.2 531.9 914.0 532.2 917.5C532.6 921.0 532.8 925.8 533.1 917.5C533.5 909.2 533.7 884.6 534.0 876.2C534.3 867.9 534.5 869.1 534.8 875.6C535.0 882.1 535.1 907.9 535.5 908.8C535.9 909.6 536.1 891.0 536.5 880.0C536.9 869.0 537.0 859.2 537.2 853.8C537.5 848.2 537.7 847.2 538.0 852.5C538.3 857.8 538.5 869.5 538.8 880.0C539.0 890.5 539.2 903.0 539.5 905.0C539.8 907.0 540.0 897.8 540.2 890.0C540.5 882.2 540.7 864.8 541.0 866.2C541.3 867.8 541.5 891.2 541.8 897.5C542.0 903.8 542.2 902.0 542.5 897.5C542.8 893.0 543.0 880.5 543.2 875.0C543.5 869.5 543.9 871.0 544.0 870.0L544.3 857.2L544.7 832.9L545.1 772.0L545.6 726.5L546.0 702.0L546.4 726.5L546.8 772.0L547.2 832.9L547.7 902.7L548.1 893.1L548.5 879.4L548.9 875.7L549.3 881.7L549.7 893.3L550.1 899.4L550.5 879.6L551.0 856.3L551.4 845.8L551.8 847.6L552.2 855.1L552.6 857.4L553.0 854.5L553.4 856.5L553.8 868.4L554.2 890.6L554.6 904.0L554.9 885.2L555.3 873.4L555.7 878.7L556.1 886.2L556.5 871.7L556.9 857.4L557.3 851.5L557.7 851.3L558.1 855.9L558.4 867.3L558.8 885.2L559.2 885.9L559.6 869.0L560.0 861.7L560.3 865.8L560.7 876.7L561.1 884.0L561.5 879.1L561.8 876.1L562.2 880.0L562.6 879.2L562.9 873.5L563.3 875.1L563.7 885.8L564.0 898.0L564.4 906.1L564.8 912.7L565.1 911.2L565.5 900.4L565.9 889.7L566.2 885.4L566.6 892.5L566.9 909.6L567.3 918.0L567.6 868.7L568.0 798.9L568.4 738.0L568.7 692.5L569.1 668.0L569.4 692.5L569.8 738.0L570.1 798.9L570.5 868.7L570.8 884.7L571.1 894.8L571.5 918.0L571.8 918.0L572.2 912.2L572.5 881.1L572.9 870.4L573.2 878.3L573.5 892.3L573.9 885.8L574.2 877.4L574.6 882.8L574.9 907.5L575.2 918.0L575.6 904.7L575.9 888.5L576.2 884.4L576.6 884.2L576.9 882.0L577.2 879.3L577.5 880.7L577.9 883.6L578.2 883.1L578.5 883.4L578.8 886.8L579.2 887.1L579.5 882.2L579.8 877.7L580.1 878.6L580.5 888.0L580.8 902.9L581.1 902.1L581.4 887.0L581.7 876.9L582.1 874.2L582.4 878.5L582.7 889.2L583.0 900.3L583.3 901.6L583.6 896.9L583.9 894.1L584.2 894.0L584.6 896.1L584.9 898.8L585.2 901.5L585.5 903.8L585.8 900.8L586.1 897.5L586.4 899.8L586.7 908.0L587.0 918.0L587.3 918.0L587.6 910.0L587.9 892.2L588.2 875.0L588.5 865.8L588.8 866.6L589.1 876.1L589.4 889.1L589.7 901.6L590.0 905.7L590.3 888.7L590.6 874.1L590.9 874.0L591.2 890.1L591.5 918.0L591.8 918.0L592.1 901.6L592.4 873.5L592.7 859.3L593.0 852.0L593.2 850.0L593.5 853.9L593.8 864.9L594.1 884.3L594.4 908.9L594.7 918.0L595.0 918.0L595.3 899.6L595.5 888.4L595.8 894.3L596.1 844.6L596.4 783.7L596.7 738.2L596.9 713.7L597.2 738.2L597.5 783.7L597.8 844.6L598.1 879.1L598.3 896.6L598.6 905.4L598.9 906.0L599.2 913.0L599.5 914.6L599.7 894.0L600.0 874.0L600.3 865.7L600.5 867.4L600.8 873.4L601.1 880.1L601.4 890.4L601.6 902.3L601.9 907.3L602.2 908.3L602.4 918.0L602.7 918.0L603.0 911.5L603.2 894.1L603.5 892.8L603.8 906.8L604.0 918.0L604.3 918.0L604.6 890.3L604.8 878.7L605.1 885.3L605.4 907.7L605.6 918.0L605.9 918.0L606.2 900.3L606.4 890.3L606.7 890.5L606.9 901.2L607.2 914.9L607.4 913.3L607.7 902.9L608.0 899.9L608.2 909.9L608.5 918.0L608.7 918.0L609.0 911.8L609.2 880.4L609.5 860.7L609.8 853.6L610.0 858.6L610.3 874.3L610.5 897.8L610.8 916.9L611.0 914.2L611.3 901.3L611.5 891.0L611.8 885.7L612.0 886.5L612.3 892.9L612.5 900.5L612.8 900.8L613.0 894.8L613.3 890.7L613.5 888.8L613.7 887.7L614.0 887.8L614.2 886.1L614.5 882.7L614.7 885.7L615.0 899.1L615.2 911.4L615.5 909.9L615.7 909.2L615.9 904.3L616.2 891.1L616.4 883.6L616.7 886.3L616.9 897.4L617.1 911.9L617.4 918.0L617.6 918.0L617.8 918.0L618.1 918.0L618.3 834.0L618.6 763.7L618.8 693.9L619.0 633.0L619.3 587.5L619.5 563.0L619.7 587.5L620.0 633.0L620.2 693.9L620.4 763.7L620.7 834.0L620.9 894.6L621.1 893.3L621.4 880.4L621.6 871.4L621.8 867.4L622.1 866.6L622.3 869.9L622.5 877.0L622.7 881.1L623.0 879.3L623.2 878.0L623.4 882.7L623.7 894.5L623.9 907.1L624.1 917.7L624.3 918.0L624.6 918.0L624.8 898.7L625.0 885.2L625.2 881.4L625.5 878.5L625.7 871.3L625.9 862.9L626.1 856.9L626.3 855.0L626.6 857.9L626.8 865.9L627.0 878.1L627.2 889.8L627.5 893.9L627.7 888.2L627.9 883.5L628.1 890.6L628.3 866.5L628.5 842.0L628.8 866.5L629.0 892.9L629.2 888.4L629.4 898.2L629.6 918.0L629.8 918.0L630.1 911.4L630.3 894.2L630.5 890.9L630.7 896.3L630.9 901.9L631.1 902.4L631.4 893.5L631.6 876.8L631.8 862.3L632.0 838.0L632.2 792.5L632.4 768.0L632.6 792.5L632.8 838.0L633.0 847.7L633.3 853.1L633.5 864.3L633.7 877.5L633.9 888.0L634.1 892.8L634.3 891.6L634.5 889.0L634.7 890.2L634.9 898.2L635.1 912.8L635.3 913.7L635.5 896.2L635.8 886.6L636.0 889.2L636.2 903.7L636.4 918.0L636.6 918.0L636.8 916.1L637.0 896.2L637.2 883.7L637.4 874.3L637.6 870.7L637.8 877.0L638.0 892.6L638.2 906.2L638.4 905.7L638.6 901.6L638.8 898.9L639.0 893.6L639.2 887.1L639.4 882.7L639.6 881.1L639.8 881.8L640.0 883.9L640.2 887.4L640.4 893.7L640.6 900.8L640.8 905.0L641.0 908.0L641.2 915.2L641.4 918.0L641.6 918.0L641.8 918.0L642.0 918.0L642.2 906.5L642.4 899.5L642.6 898.4L642.8 900.6L643.0 902.7L643.1 901.1L643.3 900.5L643.5 907.8L643.7 917.9L643.9 918.0L644.1 918.0L644.3 916.2L644.5 910.2L644.7 911.5L644.9 872.5L645.1 848.0L645.3 872.5L645.5 884.3L645.6 876.1L645.8 876.0L646.0 886.9L646.2 909.1L646.4 918.0L646.6 918.0L646.8 913.2L647.0 904.4L647.2 898.6L647.3 894.4L647.5 900.2L647.7 918.0L647.9 918.0L648.1 918.0L648.3 918.0L648.5 918.0L648.7 918.0L648.8 895.5L649.0 871.3L649.2 862.2L649.4 864.1L649.6 875.1L649.8 893.6L649.9 909.4L650.1 908.5L650.3 902.6L650.5 900.8L650.7 900.1L650.9 901.6L651.0 910.3L651.2 910.4L651.4 895.5L651.6 886.2L651.8 885.3L652.0 889.9L652.1 895.6L652.3 898.2L652.5 898.0L652.7 894.3L652.9 888.1L653.0 885.4L653.2 891.2L653.4 901.9L653.6 901.9L653.7 888.5L653.9 876.3L654.1 876.0L654.3 892.1L654.5 918.0L654.6 918.0L654.8 887.9L655.0 827.0L655.2 781.5L655.3 757.0L655.5 781.5L655.7 827.0L655.9 887.9L656.0 886.3L656.2 894.7L656.4 904.2L656.6 895.1L656.7 880.2L656.9 869.5L657.1 861.2L657.3 857.0L657.4 860.1L657.6 871.5L657.8 887.8L658.0 900.6L658.1 908.0L658.3 910.6L658.5 901.1L658.6 890.6L658.8 890.5L659.0 899.6L659.2 903.2L659.3 894.7L659.5 887.5L659.7 853.5L659.8 792.6L660.0 747.1L660.2 722.6L660.3 747.1L660.5 792.6L660.7 853.5L660.9 886.5L661.0 881.9L661.2 887.0L661.4 899.1L661.5 912.5L661.7 911.8L661.9 899.8L662.0 891.6L662.2 890.2L662.4 893.3L662.5 892.9L662.7 884.0L662.9 873.4L663.0 869.4L663.2 874.0L663.4 881.5L663.5 884.7L663.7 889.3L663.8 905.3L664.0 918.0L664.2 918.0L664.3 909.3L664.5 879.9L664.7 860.5L664.8 850.4L665.0 849.8L665.2 858.4L665.3 874.9L665.5 897.4L665.6 918.0L665.8 918.0L666.0 918.0L666.1 892.1L666.3 879.8L666.5 883.0L666.6 898.6L666.8 918.0L666.9 915.8L667.1 893.8L667.3 878.8L667.4 873.4L667.6 875.4L667.7 877.9L667.9 875.5L668.1 873.4L668.2 879.7L668.4 901.7L668.5 918.0L668.7 918.0L668.8 900.6L669.0 892.2L669.2 894.2L669.3 900.6L669.5 905.2L669.6 905.5L669.8 900.4L669.9 886.0L670.1 872.4L670.3 868.8L670.4 875.0L670.6 885.6L670.7 896.6L670.9 904.2L671.0 906.0L671.2 911.2L671.3 918.0L671.5 906.8L671.7 880.4L671.8 864.4L672.0 850.0L672.1 866.2L672.3 880.7L672.4 905.2L672.6 918.0L672.7 918.0L672.9 916.0L673.0 901.9L673.2 889.3L673.3 875.7L673.5 864.0L673.7 856.4L673.8 853.0L674.0 853.0L674.1 857.9L674.3 869.1L674.4 881.3L674.6 878.8L674.7 870.5L674.9 871.2L675.0 884.9L675.2 914.4L675.3 918.0L675.5 917.3L675.6 908.6L675.8 910.7L675.9 916.5L676.1 918.0L676.2 909.2L676.4 893.7L676.5 882.6L676.7 879.1L676.8 885.2L677.0 905.4L677.1 918.0L677.2 918.0L677.4 905.7L677.5 891.8L677.7 894.8L677.8 915.7L678.0 918.0L678.1 918.0L678.3 905.7L678.4 895.6L678.6 892.0L678.7 890.7L678.9 892.1L679.0 895.3L679.2 895.2L679.3 892.6L679.4 892.4L679.6 894.5L679.7 896.6L679.9 893.7L680.0 884.1L680.2 875.0L680.3 873.0L680.5 879.3L680.6 889.0L680.7 897.5L680.9 907.0L681.0 913.9L681.2 907.7L681.3 897.9L681.5 895.7L681.6 902.9L681.7 913.9L681.9 917.2L682.0 909.5L682.2 899.2L682.3 891.3L682.5 885.6L682.6 881.8L682.7 880.4L682.9 834.6L683.0 789.1L683.2 764.6L683.3 789.1L683.4 834.6L683.6 880.0L683.7 875.4L683.9 873.1L684.0 870.4L684.1 869.7L684.3 875.6L684.4 891.0L684.6 911.4L684.7 907.4L684.8 896.4L685.0 897.3L685.1 895.9L685.3 887.6L685.4 887.9L685.5 903.7L685.7 918.0L685.8 918.0L685.9 918.0L686.1 918.0L686.2 916.6L686.4 901.4L686.5 892.5L686.6 888.6L686.8 885.9L686.9 884.8L687.0 886.4L687.2 892.0L687.3 904.4L687.5 918.0L687.6 918.0L687.7 914.0L687.9 908.4L688.0 917.3L688.1 918.0L688.3 902.6L688.4 885.3L688.5 873.6L688.7 868.5L688.8 870.0L688.9 877.2L689.1 890.5L689.2 915.5L689.3 918.0L689.5 918.0L689.6 918.0L689.7 914.4L689.9 876.5L690.0 852.0L690.2 876.5L690.3 879.1L690.4 878.7L690.5 884.1L690.7 886.8L690.8 883.1L690.9 880.2L691.1 883.2L691.2 897.8L691.3 918.0L691.5 918.0L691.6 900.9L691.7 889.8L691.9 892.7L692.0 898.2L692.1 897.0L692.3 895.0L692.4 896.8L692.5 897.0L692.7 892.6L692.8 889.0L692.9 889.6L693.0 895.6L693.2 901.3L693.3 899.0L693.4 898.4L693.6 902.4L693.7 903.4L693.8 900.8L694.0 898.3L694.1 894.2L694.2 886.8L694.3 876.8L694.5 868.0L694.6 864.9L694.7 870.1L694.9 883.0L695.0 896.1L695.1 904.8L695.2 916.9L695.4 918.0L695.5 915.8L695.6 906.9L695.8 899.4L695.9 889.6L696.0 875.0L696.1 864.2L696.3 862.1L696.4 869.9L696.5 889.7L696.6 918.0L696.8 918.0L696.9 918.0L697.0 915.5L697.1 904.6L697.3 909.8L697.4 918.0L697.5 918.0L697.6 918.0L697.8 918.0L697.9 918.0L698.0 918.0L698.2 912.2L698.3 899.9L698.4 896.3L698.5 900.0L698.6 903.5L698.8 899.6L698.9 895.8L699.0 898.8L699.1 908.8L699.3 913.8L699.4 913.8L699.5 918.0L699.6 918.0L699.8 902.9L699.9 879.1L700.0 868.3L700.1 865.3L700.3 867.4L700.4 873.9L700.5 882.6L700.6 888.1L700.7 890.4L700.9 892.0L701.0 887.7L701.1 878.1L701.2 870.5L701.4 869.8L701.5 877.9L701.6 894.6L701.7 914.8L701.8 918.0L702.0 909.2L702.1 886.9L702.2 826.0L702.3 780.5L702.4 756.0L702.6 780.5L702.7 826.0L702.8 868.3L702.9 866.2L703.1 869.7L703.2 878.3L703.3 890.8L703.4 899.1L703.5 900.0L703.7 895.9L703.8 882.1L703.9 869.2L704.0 866.9L704.1 876.7L704.2 892.2L704.4 893.8L704.5 882.1L704.6 873.6L704.7 873.1L704.8 877.9L705.0 877.7L705.1 870.1L705.2 865.4L705.3 867.4L705.4 872.1L705.6 874.8L705.7 858.5L705.8 834.0L705.9 858.5L706.0 904.0L706.1 901.1L706.3 891.0L706.4 887.9L706.5 890.4L706.6 901.8L706.7 918.0L706.8 918.0L707.0 918.0L707.1 918.0L707.2 918.0L707.3 918.0L707.4 918.0L707.5 918.0L707.7 918.0L707.8 918.0L707.9 918.0L708.0 918.0L708.1 918.0L708.2 918.0L708.3 918.0L708.5 918.0L708.6 918.0L708.7 918.0L708.8 918.0L708.9 918.0L709.0 918.0L709.2 913.7L709.3 899.5L709.4 895.3L709.5 898.0L709.6 901.9L709.7 907.4L709.8 918.0L709.9 918.0L710.1 918.0L710.2 884.8L710.3 870.5L710.4 868.0L710.5 873.7L710.6 884.3L710.7 890.6L710.9 889.3L711.0 889.9L711.1 891.3L711.2 884.4L711.3 876.7L711.4 877.6L711.5 889.4L711.6 906.7L711.8 906.9L711.9 874.5L712.0 850.0L712.1 874.5L712.2 918.0L712.3 918.0L712.4 918.0L712.5 911.0L712.6 901.1L712.8 890.7L712.9 891.5L713.0 907.8L713.1 918.0L713.2 918.0L713.3 918.0L713.4 918.0L713.5 918.0L713.6 908.8L713.8 901.3L713.9 899.7L714.0 904.0L714.1 909.5L714.2 910.1L714.3 907.3L714.4 906.9L714.5 909.6L714.6 917.3L714.7 918.0L714.9 918.0L715.0 918.0L715.1 917.9L715.2 918.0L715.3 918.0L715.4 918.0L715.5 918.0L715.6 918.0L715.7 918.0L715.8 916.8L715.9 894.3L716.1 876.5L716.2 868.0L716.3 869.5L716.4 880.1L716.5 897.3L716.6 918.0L716.7 918.0L716.8 918.0L716.9 918.0L717.0 914.4L717.1 899.7L717.2 889.6L717.3 886.5L717.5 890.0L717.6 899.0L717.7 909.6L717.8 910.7L717.9 910.3L718.0 918.0L718.1 918.0L718.2 918.0L718.3 914.5L718.4 893.6L718.5 889.3L718.6 899.0L718.7 917.3L718.8 916.5L718.9 902.0L719.0 863.3L719.2 838.8L719.3 863.3L719.4 898.9L719.5 887.5L719.6 879.8L719.7 877.9L719.8 880.1L719.9 885.8L720.0 886.4L720.1 878.6L720.2 878.1L720.3 893.0L720.4 918.0L720.5 918.0L720.6 918.0L720.7 918.0L720.8 918.0L720.9 918.0L721.0 917.9L721.1 918.0L721.3 918.0L721.4 918.0L721.5 918.0L721.6 912.3L721.7 917.8L721.8 918.0L721.9 918.0L722.0 913.1L722.1 897.7L722.2 890.1L722.3 892.6L722.4 903.6L722.5 904.1L722.6 886.3L722.7 872.1L722.8 867.9L722.9 873.3L723.0 885.4L723.1 898.9L723.2 911.0L723.3 918.0L723.4 914.3L723.5 895.5L723.6 887.3L723.7 893.8L723.8 908.6L723.9 906.2L724.0 893.3L724.1 887.5L724.2 890.4L724.3 905.4L724.4 918.0L724.5 918.0L724.6 918.0L724.7 918.0L724.8 893.6L724.9 832.7L725.0 787.2L725.1 762.7L725.2 787.2L725.3 832.7L725.4 893.6L725.5 905.6L725.6 898.8L725.7 898.9L725.8 900.3L725.9 887.5L726.0 872.5L726.1 867.0L726.2 869.0L726.3 872.5L726.4 873.9L726.5 875.9L726.6 883.7L726.7 901.0L726.8 915.5L726.9 903.8L727.0 894.5L727.1 896.7L727.2 905.1L727.3 913.5L727.4 918.0L727.5 918.0L727.6 914.7L727.7 897.3L727.8 883.1L727.9 876.9L728.0 878.0L728.1 881.4L728.2 884.6L728.3 892.4L728.4 907.6L728.5 918.0L728.6 918.0L728.7 918.0L728.8 910.5L728.9 907.1L729.0 908.3L729.1 895.9L729.2 881.1L729.3 877.2L729.4 886.5L729.5 907.8L729.6 918.0L729.7 918.0L729.8 918.0L729.9 898.3L730.0 885.8L730.1 883.4L730.2 886.6L730.3 890.9L730.4 890.3L730.5 884.4L730.6 879.9L730.7 880.1L730.8 885.1L730.8 894.4L730.9 898.6L731.0 884.7L731.1 869.8L731.2 864.1L731.3 865.0L731.4 867.8L731.5 871.1L731.6 879.0L731.7 894.3L731.8 916.4L731.9 918.0L732.0 918.0L732.1 918.0L732.2 918.0L732.3 905.1L732.4 899.8L732.5 901.4L732.6 900.7L732.7 897.3L732.8 896.7L732.9 895.0L732.9 886.8L733.0 876.3L733.1 870.0L733.2 872.1L733.3 882.4L733.4 896.0L733.5 908.5L733.6 918.0L733.7 918.0L733.8 917.8L733.9 918.0L734.0 914.5L734.1 891.0L734.2 878.1L734.3 880.7L734.4 899.8L734.5 918.0L734.5 911.3L734.6 887.1L734.7 874.3L734.8 868.8L734.9 866.4L735.0 865.5L735.1 868.0L735.2 876.8L735.3 891.3L735.4 904.5L735.5 904.8L735.6 895.6L735.7 888.3L735.8 888.9L735.8 900.0L735.9 916.9L736.0 918.0L736.1 911.4L736.2 915.0L736.3 918.0L736.4 918.0L736.5 911.3L736.6 893.0L736.7 880.9L736.8 877.6L736.9 888.1L736.9 918.0L737.0 918.0L737.1 904.2L737.2 885.9L737.3 879.6L737.4 880.3L737.5 888.2L737.6 906.9L737.7 918.0L737.8 918.0L737.9 918.0L738.0 872.5L738.0 848.0L738.1 872.5L738.2 871.4L738.3 867.6L738.4 874.6L738.5 888.4L738.6 897.7L738.7 894.4L738.8 886.5L738.9 877.8L738.9 871.5L739.0 872.7L739.1 884.3L739.2 904.5L739.3 918.0L739.4 918.0L739.5 918.0L739.6 918.0L739.7 906.7L739.8 902.7L739.8 902.5L739.9 911.8L740.0 918.0L740.1 918.0L740.2 918.0L740.3 914.6L740.4 896.7L740.5 889.3L740.6 889.5L740.7 895.5L740.7 906.0L740.8 917.9L740.9 918.0L741.0 917.6L741.1 906.1L741.2 894.9L741.3 892.8L741.4 900.4L741.4 900.6L741.5 885.9L741.6 875.4L741.7 873.5L741.8 877.3L741.9 881.3L742.0 885.1L742.1 894.7L742.2 913.6L742.2 918.0L742.3 918.0L742.4 904.0L742.5 884.1L742.6 875.7L742.7 873.9L742.8 874.6L742.9 876.0L742.9 878.4L743.0 882.9L743.1 889.8L743.2 897.5L743.3 901.8L743.4 901.7L743.5 904.4L743.6 913.9L743.6 918.0L743.7 909.5L743.8 896.4L743.9 894.1L744.0 901.6L744.1 910.4L744.2 906.5L744.2 890.4L744.3 877.6L744.4 874.9L744.5 883.4L744.6 902.3L744.7 918.0L744.8 918.0L744.9 916.8L744.9 903.8L745.0 889.0L745.1 881.5L745.2 881.9L745.3 884.8L745.4 887.3L745.5 897.8L745.5 918.0L745.6 918.0L745.7 906.7L745.8 896.5L745.9 895.7L746.0 894.5L746.0 889.5L746.1 885.0L746.2 883.7L746.3 886.8L746.4 891.9L746.5 899.4L746.6 918.0L746.6 918.0L746.7 918.0L746.8 918.0L746.9 918.0L747.0 909.6L747.1 848.7L747.2 803.2L747.2 778.7L747.3 803.2L747.4 848.7L747.5 909.6L747.6 918.0L747.7 904.1L747.7 891.5L747.8 894.4L747.9 903.0L748.0 914.9L748.1 918.0L748.2 912.2L748.2 899.7L748.3 904.4L748.4 918.0L748.5 918.0L748.6 902.3L748.7 898.2L748.7 912.6L748.8 918.0L748.9 901.2L749.0 876.0L749.1 863.9L749.2 861.8L749.2 869.0L749.3 883.9L749.4 891.3L749.5 880.0L749.6 871.2L749.7 873.5L749.7 886.0L749.8 899.6L749.9 895.4L750.0 883.4L750.1 879.7L750.2 887.4L750.2 904.3L750.3 908.2L750.4 890.9L750.5 880.9L750.6 881.2L750.6 885.5L750.7 889.3L750.8 891.8L750.9 894.0L751.0 898.4L751.1 909.7L751.1 918.0L751.2 918.0L751.3 918.0L751.4 918.0L751.5 918.0L751.5 918.0L751.6 918.0L751.7 918.0L751.8 918.0L751.9 918.0L752.0 918.0L752.0 915.8L752.1 903.6L752.2 905.6L752.3 910.1L752.4 911.0L752.4 915.6" stroke="#000" stroke-width="2.1" fill="none" stroke-linejoin="round" stroke-linecap="round"/>
<path d="M752.57 876.1V917.0M753.57 887.5V917.0M754.57 848.6V917.0M755.57 894.5V917.0M756.57 873.8V917.0M757.57 866.4V917.0M758.57 878.1V917.0M759.57 872.8V917.0M760.57 886.8V917.0M761.57 874.0V917.0M762.57 871.6V917.0M763.57 874.1V917.0M764.57 875.6V917.0M765.57 881.3V917.0M766.57 875.8V917.0M767.57 867.8V917.0M768.57 877.8V917.0M769.57 873.5V917.0M770.57 868.3V917.0M771.57 878.1V917.0M772.57 872.8V917.0M773.57 890.0V917.0M774.57 884.2V917.0M775.57 878.4V917.0M776.57 871.7V917.0M777.57 870.5V917.0M778.57 852.1V917.0M779.57 865.6V917.0M780.57 874.8V917.0M781.57 872.6V917.0M782.57 867.3V917.0M783.57 869.6V917.0M784.57 874.0V917.0M785.57 888.5V917.0M786.57 880.3V917.0M787.57 885.6V917.0M788.57 892.5V917.0M789.57 873.0V917.0M790.57 875.5V917.0M791.57 890.6V917.0M792.57 875.9V917.0M793.57 868.9V917.0M794.57 865.5V917.0M795.57 879.0V917.0M796.57 862.5V917.0M797.57 870.6V917.0M798.57 869.8V917.0M799.57 866.9V917.0M800.57 864.8V917.0M801.57 878.0V917.0M802.57 876.6V917.0M803.57 874.5V917.0M804.57 858.5V917.0M805.57 884.9V917.0M806.57 871.1V917.0M807.57 871.3V917.0M808.57 879.4V917.0M809.57 859.1V917.0M810.57 867.4V917.0M811.57 873.7V917.0M812.57 884.7V917.0M813.57 876.6V917.0M814.57 863.8V917.0M815.57 880.5V917.0M816.57 876.0V917.0M817.57 880.7V917.0M818.57 875.6V917.0M819.57 875.0V917.0M820.57 863.3V917.0M821.57 870.5V917.0M822.57 882.8V917.0M823.57 879.2V917.0M824.57 874.0V917.0M825.57 887.5V917.0M826.57 859.2V917.0M827.57 889.2V917.0M828.57 854.7V917.0M829.57 867.7V917.0M830.57 883.3V917.0M831.57 866.5V917.0M832.57 869.5V917.0M833.57 879.8V917.0M834.57 871.3V917.0M835.57 865.6V917.0M836.57 872.8V917.0M837.57 868.2V917.0M838.57 860.4V917.0M839.57 880.6V917.0M840.57 874.0V917.0M841.57 862.9V917.0M842.57 874.5V917.0M843.57 880.6V917.0M844.57 862.5V917.0M845.57 868.3V917.0M846.57 879.6V917.0M847.57 867.2V917.0M848.57 858.9V917.0M849.57 872.0V917.0M850.57 866.3V917.0M851.57 876.0V917.0M852.57 861.7V917.0M853.57 858.3V917.0M854.57 879.9V917.0M855.57 885.6V917.0M856.57 880.5V917.0M857.57 869.9V917.0M858.57 872.4V917.0M859.57 879.3V917.0M860.57 870.8V917.0M861.57 870.8V917.0M862.57 878.1V917.0M863.57 872.0V917.0M864.57 876.7V917.0M865.57 874.4V917.0M866.57 873.2V917.0M867.57 880.9V917.0M868.57 880.5V917.0M869.57 860.2V917.0M870.57 858.6V917.0M871.57 863.8V917.0M872.57 868.7V917.0M873.57 864.9V917.0M874.57 877.6V917.0M875.57 888.6V917.0M876.57 882.8V917.0M877.57 868.6V917.0M878.57 875.4V917.0M879.57 875.0V917.0M880.57 870.0V917.0M881.57 882.2V917.0M882.57 884.9V917.0M883.57 868.6V917.0M884.57 871.7V917.0M885.57 865.1V917.0M886.57 870.3V917.0M887.57 868.3V917.0M888.57 867.6V917.0M889.57 877.3V917.0M890.57 877.1V917.0M891.57 879.3V917.0M892.57 878.4V917.0M893.57 885.7V917.0M894.57 877.1V917.0M895.57 876.3V917.0M896.57 885.9V917.0M897.57 873.3V917.0M898.57 874.1V917.0M899.57 872.7V917.0M900.57 874.1V917.0M901.57 871.3V917.0M902.57 880.8V917.0M903.57 862.7V917.0M904.57 873.3V917.0M905.57 877.5V917.0M906.57 876.9V917.0M907.57 862.8V917.0M908.57 865.3V917.0M909.57 876.4V917.0M910.57 851.7V917.0M911.57 880.8V917.0M912.57 870.6V917.0M913.57 870.7V917.0M914.57 872.5V917.0M915.57 872.1V917.0M916.57 877.0V917.0M917.57 876.0V917.0M918.57 862.2V917.0M919.57 872.2V917.0M920.57 877.3V917.0M921.57 865.2V917.0M922.57 869.3V917.0M923.57 880.8V917.0M924.57 877.7V917.0M925.57 873.5V917.0M926.57 875.9V917.0M927.57 868.4V917.0M928.57 878.1V917.0M929.57 879.6V917.0M930.57 881.3V917.0M931.57 877.3V917.0M932.57 875.6V917.0M933.57 871.7V917.0M934.57 858.7V917.0M935.57 878.5V917.0M936.57 873.2V917.0M937.57 872.4V917.0M938.57 874.9V917.0M939.57 864.1V917.0M940.57 873.3V917.0M941.57 886.1V917.0M942.57 878.0V917.0M943.57 868.8V917.0M944.57 877.7V917.0M945.57 881.7V917.0M946.57 881.0V917.0M947.57 884.0V917.0M948.57 873.8V917.0M949.57 868.6V917.0M950.57 874.1V917.0M951.57 852.9V917.0M952.57 865.7V917.0M953.57 869.7V917.0M954.57 874.5V917.0M955.57 881.7V917.0M956.57 867.3V917.0M957.57 875.8V917.0M958.57 868.3V917.0M959.57 875.3V917.0M960.57 871.4V917.0M961.57 886.9V917.0M962.57 872.6V917.0M963.57 874.5V917.0M964.57 879.7V917.0M965.57 882.4V917.0M966.57 872.7V917.0M967.57 881.7V917.0M968.57 869.8V917.0M969.57 868.1V917.0M970.57 861.7V917.0M971.57 865.9V917.0M972.57 876.1V917.0M973.57 872.7V917.0M974.57 881.2V917.0M975.57 863.1V917.0M976.57 873.9V917.0M977.57 880.3V917.0M978.57 875.1V917.0M979.57 863.4V917.0M980.57 863.8V917.0M981.57 870.7V917.0M982.57 869.9V917.0M983.57 868.1V917.0M984.57 864.8V917.0M985.57 875.6V917.0M986.57 863.2V917.0M987.57 880.9V917.0M988.57 879.0V917.0M989.57 871.9V917.0M990.57 873.8V917.0M991.57 876.1V917.0M992.57 875.8V917.0M993.57 873.7V917.0M994.57 854.8V917.0M995.57 873.9V917.0M996.57 877.9V917.0M997.57 861.2V917.0M998.57 861.9V917.0M999.57 869.5V917.0M1000.57 872.2V917.0M1001.57 871.5V917.0M1002.57 869.2V917.0M1003.57 877.7V917.0M1004.57 868.9V917.0M1005.57 869.5V917.0M1006.57 885.2V917.0M1007.57 879.3V917.0M1008.57 866.0V917.0M1009.57 867.1V917.0M1010.57 873.0V917.0M1011.57 873.8V917.0M1012.57 867.3V917.0M1013.57 872.9V917.0M1014.57 873.7V917.0M1015.57 873.2V917.0M1016.57 879.1V917.0M1017.57 874.0V917.0M1018.57 873.3V917.0M1019.57 881.6V917.0M1020.57 868.6V917.0M1021.57 874.2V917.0M1022.57 865.3V917.0M1023.57 883.4V917.0M1024.57 871.8V917.0M1025.57 863.2V917.0M1026.57 865.2V917.0M1027.57 871.8V917.0M1028.57 869.0V917.0M1029.57 876.3V917.0M1030.57 866.5V917.0M1031.57 874.6V917.0M1032.57 876.7V917.0M1033.57 876.1V917.0M1034.57 866.3V917.0M1035.57 862.7V917.0M1036.57 867.3V917.0M1037.57 868.3V917.0M1038.57 874.5V917.0M1039.57 866.7V917.0M1040.57 866.1V917.0M1041.57 879.0V917.0M1042.57 874.2V917.0M1043.57 872.6V917.0M1044.57 872.3V917.0M1045.57 877.2V917.0M1046.57 868.7V917.0M1047.57 869.4V917.0M1048.57 872.5V917.0M1049.57 868.8V917.0M1050.57 863.1V917.0M1051.57 871.4V917.0M1052.57 870.1V917.0M1053.57 876.4V917.0M1054.57 876.1V917.0M1055.57 860.4V917.0M1056.57 864.6V917.0M1057.57 877.3V917.0M1058.57 874.2V917.0M1059.57 872.2V917.0M1060.57 879.7V917.0M1061.57 867.0V917.0M1062.57 871.1V917.0M1063.57 873.1V917.0M1064.57 863.8V917.0M1065.57 869.3V917.0M1066.57 861.8V917.0M1067.57 867.0V917.0M1068.57 872.6V917.0M1069.57 871.4V917.0M1070.57 874.8V917.0M1071.57 868.8V917.0M1072.57 874.6V917.0M1073.57 871.2V917.0M1074.57 871.3V917.0M1075.57 865.6V917.0M1076.57 871.1V917.0M1077.57 875.6V917.0M1078.57 876.7V917.0M1079.57 873.8V917.0M1080.57 869.0V917.0M1081.57 875.3V917.0M1082.57 872.6V917.0M1083.57 865.6V917.0M1084.57 862.4V917.0M1085.57 879.5V917.0M1086.57 875.6V917.0M1087.57 871.0V917.0M1088.57 863.8V917.0M1089.57 880.3V917.0M1090.57 875.2V917.0M1091.57 873.5V917.0M1092.57 868.6V917.0M1093.57 873.5V917.0M1094.57 877.7V917.0M1095.57 870.5V917.0M1096.57 876.0V917.0M1097.57 868.4V917.0M1098.57 875.8V917.0M1099.57 881.0V917.0M1100.57 866.1V917.0M1101.57 874.0V917.0M1102.57 875.3V917.0M1103.57 875.7V917.0M1104.57 869.5V917.0M1105.57 861.6V917.0M1106.57 875.6V917.0M1107.57 862.0V917.0M1108.57 870.4V917.0M1109.57 869.6V917.0M1110.57 873.8V917.0M1111.57 876.1V917.0M1112.57 871.8V917.0M1113.57 883.0V917.0M1114.57 870.6V917.0M1115.57 878.0V917.0M1116.57 875.1V917.0M1117.57 869.7V917.0M1118.57 877.2V917.0M1119.57 868.1V917.0M1120.57 881.2V917.0M1121.57 873.9V917.0M1122.57 881.1V917.0M1123.57 867.1V917.0M1124.57 869.4V917.0M1125.57 874.9V917.0M1126.57 875.9V917.0M1127.57 869.3V917.0M1128.57 882.4V917.0M1129.57 876.6V917.0M1130.57 867.4V917.0M1131.57 869.5V917.0M1132.57 870.9V917.0M1133.57 874.1V917.0M1134.57 864.6V917.0M1135.57 879.3V917.0M1136.57 873.3V917.0M1137.57 868.7V917.0M1138.57 876.8V917.0M1139.57 871.0V917.0M1140.57 866.5V917.0M1141.57 862.6V917.0M1142.57 881.4V917.0M1143.57 874.2V917.0M1144.57 867.3V917.0M1145.57 862.1V917.0M1146.57 874.7V917.0M1147.57 868.7V917.0M1148.57 872.0V917.0M1149.57 873.2V917.0M1150.57 866.6V917.0M1151.57 871.9V917.0M1152.57 869.7V917.0M1153.57 865.9V917.0M1154.57 869.1V917.0M1155.57 866.9V917.0M1156.57 872.5V917.0M1157.57 874.9V917.0M1158.57 870.9V917.0M1159.57 871.6V917.0M1160.57 871.3V917.0M1161.57 871.5V917.0M1162.57 855.9V917.0M1163.57 877.7V917.0M1164.57 864.6V917.0M1165.57 864.6V917.0M1166.57 866.9V917.0M1167.57 869.9V917.0M1168.57 865.2V917.0M1169.57 873.6V917.0M1170.57 871.7V917.0M1171.57 862.2V917.0M1172.57 864.4V917.0M1173.57 878.6V917.0M1174.57 866.6V917.0M1175.57 872.9V917.0M1176.57 873.3V917.0M1177.57 872.2V917.0M1178.57 864.2V917.0M1179.57 874.9V917.0M1180.57 864.1V917.0M1181.57 877.5V917.0M1182.57 869.5V917.0M1183.57 875.0V917.0M1184.57 869.7V917.0M1185.57 860.6V917.0M1186.57 864.0V917.0M1187.57 878.9V917.0M1188.57 859.7V917.0M1189.57 877.5V917.0M1190.57 871.0V917.0M1191.57 875.4V917.0M1192.57 871.2V917.0M1193.57 866.4V917.0M1194.57 865.8V917.0M1195.57 875.4V917.0M1196.57 871.9V917.0M1197.57 867.9V917.0M1198.57 871.2V917.0M1199.57 874.4V917.0M1200.57 865.8V917.0M1201.57 872.2V917.0M1202.57 869.9V917.0M1203.57 874.1V917.0M1204.57 874.3V917.0M1205.57 873.8V917.0M1206.57 879.1V917.0M1207.57 872.5V917.0M1208.57 876.8V917.0M1209.57 868.7V917.0M1210.57 866.3V917.0M1211.57 869.6V917.0M1212.57 873.9V917.0M1213.57 869.9V917.0M1214.57 869.3V917.0M1215.57 878.9V917.0M1216.57 871.3V917.0M1217.57 873.1V917.0M1218.57 868.9V917.0M1219.57 864.7V917.0M1220.57 879.4V917.0" stroke="#000" stroke-width="1.45" fill="none"/>
<rect x="806.4" y="884" width="414.6" height="31" fill="#000"/>
<path d="M758.9 801.7V915M769.7 828.8V915M781.8 744.5V915M779.6 805.0V915M789.0 825.8V915M797.5 817.3V915M802.7 796.5V915M805.7 838.0V915M823.9 857.7V915" stroke="#000" stroke-width="2" fill="none" stroke-linecap="round"/>
<path d="M1077 237V600" stroke="#000" stroke-width="2" />
<polygon points="1075.2,560.0 1075.2,580.0 1074.0,582.0 1074.0,704.0 1072.0,704.0 1071.5,706.0 1070.3,706.0 1070.3,712.0 1067.0,710.0 1067.0,777.0 1065.0,777.0 1065.0,837.0 1062.8,837.0 1062.8,915.0 1090.4,915.0 1090.4,833.0 1088.2,833.0 1088.2,779.0 1086.2,777.0 1086.2,748.0 1080.0,748.0 1080.0,600.0 1078.8,582.0 1078.8,560.0" fill="#000"/>
<path d="M1055.8 773.0V915" stroke="#000" stroke-width="1.7" stroke-linecap="round"/>
<path d="M1058.6 794.8V915" stroke="#000" stroke-width="1.7" stroke-linecap="round"/>
<path d="M1053.4 800.6V915" stroke="#000" stroke-width="1.7" stroke-linecap="round"/>
<path d="M1046.9 855.6V915" stroke="#000" stroke-width="1.7" stroke-linecap="round"/>
<path d="M1109.6 854.5V915" stroke="#000" stroke-width="1.7" stroke-linecap="round"/>
<path d="M1105.4 861.0V915" stroke="#000" stroke-width="1.7" stroke-linecap="round"/>
<path d="M1111.5 856.0V915" stroke="#000" stroke-width="1.7" stroke-linecap="round"/>
<path d="M1100.5 838.0V915" stroke="#000" stroke-width="1.7" stroke-linecap="round"/>
<polygon points="1092.0,915.0 1092.0,795.0 1093.6,793.6 1094.2,778.0 1095.6,777.0 1096.4,803.0 1098.0,804.0 1098.6,840.0 1100.0,842.0 1100.0,915.0" fill="#000"/>
<polygon points="1060.0,915.0 1060.0,862.0 1063.0,858.0 1063.0,915.0" fill="#000"/>
<polygon points="1162.1,627.0 1163.9,627.0 1164.2,664.0 1165.3,665.0 1165.4,720.0 1166.4,721.0 1166.6,743.0 1170.3,745.0 1170.6,808.0 1174.5,809.0 1175.5,846.0 1177.0,850.0 1177.0,915.0 1150.0,915.0 1150.5,834.0 1151.8,833.0 1152.0,813.0 1153.5,812.0 1154.0,824.0 1155.5,824.0 1155.8,806.0 1157.3,805.0 1157.3,751.0 1158.5,750.0 1158.8,745.0 1161.0,743.0 1161.2,722.0 1161.9,720.0 1161.8,664.0" fill="#000"/>
<path d="M1142.7 854.0V915" stroke="#000" stroke-width="1.6" stroke-linecap="round"/>
<path d="M1139.5 860.0V915" stroke="#000" stroke-width="1.6" stroke-linecap="round"/>
<path d="M1145.5 862.0V915" stroke="#000" stroke-width="1.6" stroke-linecap="round"/>
<path d="M1148.0 860.0V915" stroke="#000" stroke-width="1.6" stroke-linecap="round"/>
<path d="M1134.0 858.0V915" stroke="#000" stroke-width="1.6" stroke-linecap="round"/>
<path d="M1180.0 858.0V915" stroke="#000" stroke-width="1.6" stroke-linecap="round"/>
<path d="M1183.0 862.0V915" stroke="#000" stroke-width="1.6" stroke-linecap="round"/>
<polygon points="1213.2,656.0 1215.0,656.0 1215.4,757.0 1216.5,759.0 1217.9,770.0 1218.4,778.0 1219.7,779.0 1220.5,826.0 1221.0,828.0 1221.0,915.0 1206.0,915.0 1206.5,840.0 1207.0,827.0 1208.6,826.0 1209.4,757.0 1210.5,756.0 1211.5,768.0 1212.6,770.0 1212.9,757.0" fill="#000"/></g><rect x="1209" y="892" width="12" height="23" fill="#858585"/><circle cx="70.3" cy="97.6" r="6.1" fill="rgba(255,255,255,.55)" stroke="#3a3a3a" stroke-width="2.2"/><path d="M66.6 97.6H74" stroke="#3a3a3a" stroke-width="3.1"/><path d="M70.3 93.9V101.3" stroke="#3a3a3a" stroke-width="3.1"/><circle cx="70.3" cy="119.5" r="6.1" fill="rgba(255,255,255,.55)" stroke="#3a3a3a" stroke-width="2.2"/><path d="M66.6 119.5H74" stroke="#3a3a3a" stroke-width="3.1"/><circle cx="1221.6" cy="902.5" r="6.1" fill="none" stroke="#3a3a3a" stroke-width="2.2"/><path d="M1217.9 902.5H1225.3" stroke="#3a3a3a" stroke-width="3.1"/><circle cx="1245" cy="902.5" r="6.1" fill="rgba(255,255,255,.55)" stroke="#3a3a3a" stroke-width="2.2"/><path d="M1241.3 902.5H1248.7" stroke="#3a3a3a" stroke-width="3.1"/><path d="M1245 898.8V906.2" stroke="#3a3a3a" stroke-width="3.1"/></svg>
<div style="left:30px;top:78px;width:26px;height:15px;background:#fff;border:1.5px solid #14148c;color:#2222b8;font-size:11px;text-align:center;line-height:12.5px">68,8</div>
<div class="combo" style="left:59px;top:133px;width:62px;height:20px;"><div class="t" style="left:6px;top:4.5px;font-size:11px">SPL</div><div class="cbtn" style="left:44px;top:0;width:16px;height:18px"><svg width="16" height="18"><polygon points="3,7 12,7 7.5,12" fill="#333"/></svg></div></div>
<div style="left:123.5px;top:87px;width:241.5px;height:182px;background:rgba(255,255,255,.88);border:3px solid #979797;border-radius:10px"><div class="t" style="right:190px;top:10.9px;font-size:10.5px"><span style="position:relative;top:-2px">IMD</span><span style="font-size:9.3px;position:relative;top:3px">DIN</span> :</div><div class="t" style="left:51.6px;top:10.9px;font-size:10.5px;font-weight:bold">0,50 %</div><div class="t" style="right:78.8px;top:10.9px;font-size:10.5px">TD+N:</div><div class="t" style="left:161.6px;top:10.9px;font-size:10.5px;font-weight:bold">0,13 %</div><div class="t" style="right:190px;top:34px;font-size:10.5px">ref:</div><div class="t" style="left:51.6px;top:34px;font-size:10.5px;font-weight:normal">f2</div><div class="t" style="right:78.8px;top:34px;font-size:10.5px">Span:</div><div class="t" style="left:161.6px;top:34px;font-size:10.5px;font-weight:bold">0 .. 22 050 Hz</div><div class="t" style="right:190px;top:55.1px;font-size:10.5px">f1:</div><div class="t" style="left:51.6px;top:55.1px;font-size:10.5px;font-weight:normal">60 Hz</div><div class="t" style="right:78.8px;top:55.1px;font-size:10.5px">f2:</div><div class="t" style="left:161.6px;top:55.1px;font-size:10.5px;font-weight:normal">7 000 Hz</div><div class="t" style="right:190px;top:75.5px;font-size:10.5px">MD2:</div><div class="t" style="left:51.6px;top:75.5px;font-size:10.5px;font-weight:bold">0,036 %</div><div class="t" style="right:78.8px;top:75.5px;font-size:10.5px">MD3:</div><div class="t" style="left:161.6px;top:75.5px;font-size:10.5px;font-weight:bold">0,55 %</div><div class="t" style="right:190px;top:96.5px;font-size:10.5px">d2L:</div><div class="t" style="left:51.6px;top:96.5px;font-size:10.5px;font-weight:bold">0,018 %</div><div class="t" style="right:78.8px;top:96.5px;font-size:10.5px">d2H:</div><div class="t" style="left:161.6px;top:96.5px;font-size:10.5px;font-weight:bold">0,018 %</div><div class="t" style="right:190px;top:117.6px;font-size:10.5px">d3L:</div><div class="t" style="left:51.6px;top:117.6px;font-size:10.5px;font-weight:bold">0,25 %</div><div class="t" style="right:78.8px;top:117.6px;font-size:10.5px">d3H:</div><div class="t" style="left:161.6px;top:117.6px;font-size:10.5px;font-weight:bold">0,30 %</div><div class="t" style="right:190px;top:138.6px;font-size:10.5px">d4L:</div><div class="t" style="left:51.6px;top:138.6px;font-size:10.5px;font-weight:bold">0,012 %</div><div class="t" style="right:78.8px;top:138.6px;font-size:10.5px">d4H:</div><div class="t" style="left:161.6px;top:138.6px;font-size:10.5px;font-weight:bold">0,011 %</div><div class="t" style="right:190px;top:159.7px;font-size:10.5px">d5L:</div><div class="t" style="left:51.6px;top:159.7px;font-size:10.5px;font-weight:bold">0,013 %</div><div class="t" style="right:78.8px;top:159.7px;font-size:10.5px">d5H:</div><div class="t" style="left:161.6px;top:159.7px;font-size:10.5px;font-weight:bold">0,024 %</div></div>
<div style="left:1025px;top:87px;width:139px;height:70px;background:rgba(255,255,255,.92);border:3px solid #979797;border-radius:10px"><div class="bl" style="top:6px;font-size:16.5px;font-weight:bold">57,42 dB</div><div class="bl" style="top:26.7px;font-size:9.5px;font-weight:bold;color:#222;letter-spacing:.1px">56,4 dB C, 45,8 dB A</div><div class="bl" style="top:38.7px;font-size:9.5px;font-weight:bold;color:#222;letter-spacing:.1px">Peak sample: -20,21 dBFS</div><div class="bl" style="top:50.7px;font-size:9.5px;font-weight:bold;color:#222;letter-spacing:.1px">57,4 dB 22 - 22k UNW</div></div>
<div style="left:1209px;top:87px;width:48px;height:44px;background:#c4c4c4;border:1px solid #707070;border-radius:5px;box-shadow:inset 0 2px 4px rgba(0,0,0,.45)"><svg width="46" height="42" style="position:absolute;left:0;top:0"><circle cx="23.2" cy="20.5" r="7.6" fill="rgba(240,90,60,.35)"/><circle cx="23.2" cy="20.5" r="6.2" fill="url(#red)"/></svg><div class="bl" style="top:27.8px;font-size:7.5px;color:#222">43%</div></div>
<div style="left:531px;top:204px;width:532px;height:38.5px;background:rgba(255,255,255,.9)"><div class="t" style="left:5px;top:8px;font-size:21.1px;font-weight:bold;letter-spacing:0">мультитон 60 Гц и 7 кгц 3 В с эл. фильтром в ИБП</div></div>
<div class="t lab" style="left:477px;top:145px;">f1</div>
<div class="t lab" style="left:1073px;top:218px;">f2</div>
<div class="t lab" style="left:1072px;top:557px;background:rgba(255,255,255,.85);padding:0 0 0 0">d3H</div>
<div class="t lab" style="left:1067px;top:568px;background:rgba(255,255,255,.85);padding:0 0 0 0">d3L</div>
<div class="t lab" style="left:1072.5px;top:706px;background:rgba(255,255,255,.85);padding:0 0 0 0">d5H</div>
<div class="t lab" style="left:1069.5px;top:720.5px;background:rgba(255,255,255,.85);padding:0 0 0 0">d2H</div>
<div class="t lab" style="left:1064.5px;top:741px;background:rgba(255,255,255,.85);padding:0 0 0 0">d5L</div>
<div class="t lab" style="left:1071.5px;top:752.5px;background:rgba(255,255,255,.85);padding:0 0 0 0">d4H</div>
<div class="btn" style="left:1166px;top:850px;width:91px;height:18px;"><div class="bl" style="top:1.5px;font-size:10.5px">10 .. 200</div></div>
<div class="btn" style="left:1166px;top:872px;width:91px;height:18px;"><div class="bl" style="top:1.5px;font-size:10.5px">20 .. 20 000</div></div>
<div class="t xl" style="left:345.336px;top:922.2px;">20</div>
<div class="t xl" style="left:396.015px;top:922.2px;">30</div>
<div class="t xl" style="left:431.973px;top:922.2px;">40</div>
<div class="t xl" style="left:459.864px;top:922.2px;">50</div>
<div class="t xl" style="left:482.652px;top:922.2px;">60</div>
<div class="t xl" style="left:501.919px;top:922.2px;">70</div>
<div class="t xl" style="left:518.609px;top:922.2px;">80</div>
<div class="t xl" style="left:546.5px;top:922.2px;">100</div>
<div class="t xl" style="left:633.136px;top:922.2px;">200</div>
<div class="t xl" style="left:683.815px;top:922.2px;">300</div>
<div class="t xl" style="left:719.773px;top:922.2px;">400</div>
<div class="t xl" style="left:747.664px;top:922.2px;">500</div>
<div class="t xl" style="left:770.452px;top:922.2px;">600</div>
<div class="t xl" style="left:806.409px;top:922.2px;">800</div>
<div class="t xl" style="left:834.3px;top:922.2px;">1k</div>
<div class="t xl" style="left:920.936px;top:922.2px;">2k</div>
<div class="t xl" style="left:971.615px;top:922.2px;">3k</div>
<div class="t xl" style="left:1007.57px;top:922.2px;">4k</div>
<div class="t xl" style="left:1035.46px;top:922.2px;">5k</div>
<div class="t xl" style="left:1058.25px;top:922.2px;">6k</div>
<div class="t xl" style="left:1077.52px;top:922.2px;">7k</div>
<div class="t xl" style="left:1094.21px;top:922.2px;">8k</div>
<div class="t xl" style="left:1122.1px;top:922.2px;">10k</div>
<div class="t xl" style="left:1208.74px;top:922.2px;">20k</div>
<div class="t" style="left:1243.5px;top:922.4px;font-size:10.5px">30kHz</div>
<div style="left:270px;top:939px;width:989px;height:15.6px;background:linear-gradient(#fefefe,#efefef 50%,#d2d2d2);border:1px solid #8a8a8a"></div>
<div style="left:1243px;top:939px;width:16px;height:15.6px;background:linear-gradient(#f4f4f4,#cfcfcf);border:1px solid #9a9a9a"><svg width="14" height="13"><polygon points="5.25,2.5 5.25,10.5 9.75,6.5" fill="#333"/></svg></div>
<div style="left:283px;top:958.5px;width:902px;height:20px;background:#fff;box-shadow:1px 2px 3px rgba(0,0,0,.4)"></div>
<div style="left:320px;top:967.5px;width:49px;height:2px;background:#e0821a"></div>
<div class="t" style="left:433px;top:963.5px;color:#d88420;font-size:11px">dB</div>
<div class="chk" style="left:483px;top:961px;width:14px;height:14px;"><svg width="12" height="12" style="position:absolute;left:0;top:0"><path d="M2.5 5.5L5 10L9.5 1.5" stroke="#111" stroke-width="1.8" fill="none"/></svg></div>
<div class="t" style="left:503.5px;top:963.5px;font-size:11px">Spectrum</div>
<div style="left:668px;top:967.5px;width:49px;height:2px;background:#000"></div>
<div class="t" style="left:753px;top:963.5px;font-size:11px">-27,3 dB</div>
<div class="chk" style="left:831px;top:961px;width:14px;height:14px;"></div>
<div class="t" style="left:851px;top:963.5px;font-size:11px;color:#9a1c28">Peak</div>
<div class="t" style="left:1101px;top:963.5px;font-size:11px;color:#9a1c28">-23,1 dB</div><div style="left:-10px;top:318px;width:291.6px;height:720px;background:#5bbd8d;border:1px solid #4a9f76;box-shadow:1px 0 2px rgba(0,0,0,.25)"></div>
<div class="t" style="left:-5.5px;top:325.3px;font-size:15px;color:#1e2a24;transform-origin:0 0;transform:scaleX(1.1208)">ки</div>
<div class="t" style="left:15.2px;top:325.3px;font-size:15px;color:#1e2a24;transform-origin:0 0;transform:scaleX(0.9469)">(E-MU</div>
<div class="t" style="left:61.4px;top:325.3px;font-size:15px;color:#1e2a24;transform-origin:0 0;transform:scaleX(0.9132)">0202</div>
<div class="t" style="left:97.6px;top:325.3px;font-size:15px;color:#1e2a24;transform-origin:0 0;transform:scaleX(1)">|</div>
<div class="t" style="left:105px;top:325.3px;font-size:15px;color:#1e2a24;transform-origin:0 0;transform:scaleX(0.8771)">USB)</div>
<div style="left:230px;top:319px;width:45px;height:20px;background:#c8494f"></div>
<div style="left:-10px;top:348.5px;width:284px;height:700px;background:#d1d1d1;border-top:1.5px solid #e6e6e6"></div>
<div style="left:-10px;top:357px;width:278.5px;height:30.5px;background:linear-gradient(#f1f1f1,#e9e9e9 45%,#dcdcdc 70%,#cdcdcd);border:1px solid #6c6c6c;box-shadow:0 1px 1px rgba(0,0,0,.4);border-radius:5px"></div>
<div style="left:134px;top:357px;width:1px;height:30.5px;background:#7e7e7e"></div>
<div class="t" style="left:64.5px;top:365.8px;font-size:16px;font-weight:bold;color:#b2b2b2;transform:translateX(-50%)">Noise</div>
<div class="t" style="left:202px;top:365.8px;font-size:16px;font-weight:bold;color:#b2b2b2;transform:translateX(-50%)">Sweeps</div>
<div style="left:-10px;top:416.5px;width:278.5px;height:22px;background:linear-gradient(#f1f1f1,#e9e9e9 45%,#dcdcdc 70%,#cdcdcd);border:1px solid #6c6c6c;box-shadow:0 1px 1px rgba(0,0,0,.4);border-radius:4px"></div>
<div style="left:87px;top:416.5px;width:1px;height:22px;background:#7e7e7e"></div>
<div class="t" style="left:0px;top:423px;font-size:10.5px;color:#b4b4b4">Tone</div>
<div class="t" style="left:178px;top:423px;font-size:10.5px;color:#b4b4b4;transform:translateX(-50%)">Multitone</div>
<div style="left:-10px;top:444px;width:278.7px;height:181.5px;background:#c1c1c1;border:1px solid #888"></div>
<div class="rad" style="left:26px;top:451px;width:14px;height:14px;"></div>
<div class="t" style="left:46.5px;top:453px;font-size:11px">Custom</div>
<div class="t" style="left:28px;top:475.5px;font-size:11px;color:#b0b0b0">f1 (Hz):</div>
<div class="t" style="left:28px;top:499.5px;font-size:11px;color:#b0b0b0">f2 (Hz):</div>
<div class="t" style="left:28px;top:522.5px;font-size:11px;color:#b0b0b0">f1:f2</div>
<div style="left:100.2px;top:469.3px;width:63.4px;height:21.3px;background:#cacaca;border:1px solid #999;box-shadow:inset 0 1px 2px rgba(0,0,0,.15)"><div class="t" style="right:15px;top:4px;font-size:11px;color:#adadad">190</div><div style="right:0;top:0;width:12px;height:19px;border-left:1px solid #999;background:linear-gradient(#e4e4e4,#c8c8c8)"><div style="left:0;top:9px;width:11px;height:1px;background:#999"></div><svg width="11" height="19"><polygon points="2.5,6.5 8.5,6.5 5.5,3.5" fill="#9a9a9a"/><polygon points="2.5,12.5 8.5,12.5 5.5,15.5" fill="#9a9a9a"/></svg></div></div>
<div style="left:100.2px;top:493.1px;width:63.4px;height:21.3px;background:#cacaca;border:1px solid #999;box-shadow:inset 0 1px 2px rgba(0,0,0,.15)"><div class="t" style="right:15px;top:4px;font-size:11px;color:#adadad">200</div><div style="right:0;top:0;width:12px;height:19px;border-left:1px solid #999;background:linear-gradient(#e4e4e4,#c8c8c8)"><div style="left:0;top:9px;width:11px;height:1px;background:#999"></div><svg width="11" height="19"><polygon points="2.5,6.5 8.5,6.5 5.5,3.5" fill="#9a9a9a"/><polygon points="2.5,12.5 8.5,12.5 5.5,15.5" fill="#9a9a9a"/></svg></div></div>
<div style="left:100.5px;top:517.5px;width:63px;height:20px;background:#cacaca;border:1px solid #999"><div class="t" style="left:4px;top:4px;font-size:11px;color:#adadad">1:1</div><div style="right:0;top:0;width:16px;height:18px;border-left:1px solid #999;background:linear-gradient(#e8e8e8,#c6c6c6)"><svg width="15" height="18"><polygon points="3,7 12,7 7.5,12" fill="#9a9a9a"/></svg></div></div>
<div class="chk" style="left:26px;top:543px;width:14px;height:14px;"><svg width="12" height="12" style="position:absolute;left:0;top:0"><path d="M2.5 5.5L5 10L9.5 1.5" stroke="#111" stroke-width="1.8" fill="none"/></svg></div>
<div class="t" style="left:46.5px;top:545px;font-size:11px">Add dither</div>
<div style="left:100.5px;top:540.5px;width:63px;height:20px;background:#fff;border:1px solid #8c8c8c"><div class="t" style="left:4px;top:4.5px;font-size:11px">24 bits</div><div style="right:0;top:0;width:16px;height:18px;border-left:1px solid #8c8c8c;background:linear-gradient(#f0f0f0,#c6c6c6)"><svg width="15" height="18"><polygon points="3,7 12,7 7.5,12" fill="#2a2a2a"/></svg></div></div>
<div style="left:-10px;top:658px;width:278.7px;height:92.5px;background:#c1c1c1;border:1px solid #888"></div>
<div style="left:-10px;top:663px;width:23.5px;height:82px;background:#fff;border:1px solid #9a9a9a"></div>
<div class="t" style="left:-2px;top:667px;font-size:11px">IS</div>
<div class="t" style="left:-16.5px;top:682.5px;font-size:46px;font-weight:bold">6</div>
<div class="t" style="left:-1px;top:732px;font-size:10.5px">ok</div>
<div style="left:13px;top:663px;width:16.5px;height:82px;background:linear-gradient(90deg,#ececec,#cdcdcd);border:1px solid #9a9a9a"><div style="left:0;top:41px;width:14px;height:1px;background:#9a9a9a"></div><svg width="14" height="80"><polygon points="3,22.5 12,22.5 7.5,17.5" fill="#333"/><polygon points="3,59.5 12,59.5 7.5,64.5" fill="#333"/></svg></div>
<div class="rad" style="left:35.6px;top:665.4px;width:14px;height:14px;"></div>
<div class="t" style="left:56px;top:667.7px;font-size:11px">dBu</div>
<div class="rad" style="left:35.6px;top:685.5px;width:14px;height:14px;"></div>
<div class="t" style="left:56px;top:687.8px;font-size:11px">dBV</div>
<div class="rad" style="left:35.6px;top:705.5px;width:14px;height:14px;"></div>
<div class="t" style="left:56px;top:707.8px;font-size:11px">Volts</div>
<div class="rad" style="left:35.6px;top:726.3px;width:14px;height:14px;"><div style="left:3px;top:3px;width:6px;height:6px;border-radius:50%;background:radial-gradient(#000 50%,#444)"></div></div>
<div class="t" style="left:56px;top:728.6px;font-size:11px">dBFS</div>
<div class="btn" style="left:104px;top:664.5px;width:54px;height:35px;font-size:11px"><div class="bl" style="top:3px">Calibrate</div><div class="bl" style="top:18px">level</div></div>
<div class="t" style="left:98px;top:708.5px;font-size:11px">FS sine Vrms</div>
<div class="field" style="left:96.5px;top:723.5px;width:69.5px;height:20.5px;"><svg width="8" height="8" style="position:absolute;left:2px;top:2px"><path d="M0 0H7L0 7Z" fill="#444"/></svg><div class="t" style="left:12px;top:4.5px;font-size:11px">1,0000 V</div></div>
<div style="left:-10px;top:768px;width:279px;height:118px;background:linear-gradient(#f4f4f4,#b8b8b8);border:1px solid #a8a8a8;border-radius:5px;box-shadow:0 1px 1px rgba(0,0,0,.3)"></div>
<div style="left:-10px;top:772px;width:274px;height:110.5px;background:#292929;border-radius:3px"></div>
<div style="left:-10px;top:905px;width:278.5px;height:29.5px;background:linear-gradient(#f1f1f1,#e9e9e9 45%,#dcdcdc 70%,#cdcdcd);border:1px solid #6c6c6c;box-shadow:0 1px 1px rgba(0,0,0,.4);border-radius:5px"></div>
<div class="t" style="left:132.5px;top:912.8px;font-size:16px;font-weight:bold;color:#b0b3b6;transform:translateX(-50%)">Save to file</div>
<div style="left:-10px;top:940px;width:278.7px;height:100px;background:#c3c3c3;border:1px solid #8e8e8e"></div>
<div style="left:-10px;top:963px;width:218px;height:23px;background:#cccccc;border:1px solid #9c9c9c"><div class="t" style="left:10px;top:6px;font-size:11px;color:#b2b2b2">R</div><div style="right:0;top:0;width:17px;height:21px;border-left:1px solid #9c9c9c;background:linear-gradient(#ececec,#cacaca)"><svg width="16" height="21"><polygon points="3.5,8.5 12.5,8.5 8,13.5" fill="#8a8a8a"/></svg></div></div>
<div style="left:-10px;top:989.5px;width:218px;height:23px;background:#fff;border:1px solid #8c8c8c"><div style="right:0;top:0;width:17px;height:21px;border-left:1px solid #9c9c9c;background:linear-gradient(#f0f0f0,#cacaca)"><svg width="16" height="21"><polygon points="3.5,8.5 12.5,8.5 8,13.5" fill="#2a2a2a"/></svg></div></div>
<div style="left:212.5px;top:962.5px;width:51px;height:50.5px;background:radial-gradient(circle at 50% 52%,#d4f0d6,#c0d6d2 55%,#b6c8c8);border:1.5px solid #6e8080;border-radius:5px;box-shadow:inset 0 1px 3px rgba(0,0,0,.35)"></div>
<svg style="position:absolute;left:0;top:0" width="1280" height="1024" viewBox="0 0 1280 1024"><path d="M186 331.8H194" stroke="#10241a" stroke-width="2"/><rect x="212.6" y="326.2" width="8.6" height="6.2" fill="none" stroke="#2f6f52" stroke-width="1.2"/><path d="M212.6 326.4H221.2" stroke="#2f6f52" stroke-width="1.8"/><path d="M248.5 325.5L256.5 333.5M256.5 325.5L248.5 333.5" stroke="#fff" stroke-width="1.8"/><path d="M-2 828.5H263.6" stroke="#8a8a8a" stroke-width="1"/><path d="M-2.0 837.2L-1.7 834.9L-1.4 831.9L-1.1 828.8L-0.8 825.9L-0.5 823.9L-0.3 822.9L0.0 823.2L0.3 824.8L0.6 827.4L0.9 830.6L1.2 834.0L1.5 837.0L1.8 839.3L2.1 840.5L2.4 840.4L2.6 839.1L2.9 836.7L3.2 833.8L3.5 830.6L3.8 827.8L4.1 825.7L4.4 824.8L4.7 825.2L5.0 826.8L5.2 829.4L5.5 832.6L5.8 836.0L6.1 839.1L6.4 841.3L6.7 842.5L7.0 842.3L7.3 840.9L7.6 838.6L7.9 835.6L8.2 832.4L8.4 829.6L8.7 827.6L9.0 826.7L9.3 827.1L9.6 828.8L9.9 831.4L10.2 834.6L10.5 838.0L10.8 841.1L11.0 843.3L11.3 844.4L11.6 844.2L11.9 842.8L12.2 840.4L12.5 837.3L12.8 834.2L13.1 831.4L13.4 829.4L13.7 828.6L13.9 829.0L14.2 830.7L14.5 833.4L14.8 836.6L15.1 840.0L15.4 843.0L15.7 845.2L16.0 846.3L16.3 846.0L16.6 844.6L16.8 842.1L17.1 839.1L17.4 836.0L17.7 833.2L18.0 831.3L18.3 830.5L18.6 830.9L18.9 832.6L19.2 835.3L19.5 838.6L19.7 842.0L20.0 845.0L20.3 847.1L20.6 848.1L20.9 847.8L21.2 846.4L21.5 843.9L21.8 840.8L22.1 837.7L22.4 834.9L22.6 833.0L22.9 832.3L23.2 832.8L23.5 834.5L23.8 837.3L24.1 840.5L24.4 843.9L24.7 846.9L25.0 849.0L25.3 849.9L25.5 849.6L25.8 848.1L26.1 845.6L26.4 842.5L26.7 839.4L27.0 836.7L27.3 834.8L27.6 834.1L27.9 834.6L28.2 836.4L28.4 839.2L28.7 842.4L29.0 845.8L29.3 848.7L29.6 850.8L29.9 851.7L30.2 851.4L30.5 849.8L30.8 847.3L31.1 844.2L31.3 841.0L31.6 838.3L31.9 836.5L32.2 835.8L32.5 836.4L32.8 838.2L33.1 841.0L33.4 844.3L33.7 847.7L34.0 850.6L34.2 852.6L34.5 853.5L34.8 853.1L35.1 851.4L35.4 848.9L35.7 845.8L36.0 842.6L36.3 840.0L36.6 838.2L36.9 837.5L37.1 838.2L37.4 840.0L37.7 842.8L38.0 846.1L38.3 849.5L38.6 852.3L38.9 854.3L39.2 855.2L39.5 854.7L39.8 853.0L40.0 850.4L40.3 847.3L40.6 844.2L40.9 841.5L41.2 839.8L41.5 839.2L41.8 839.9L42.1 841.7L42.4 844.6L42.7 847.9L42.9 851.2L43.2 854.1L43.5 856.0L43.8 856.8L44.1 856.3L44.4 854.6L44.7 852.0L45.0 848.8L45.3 845.7L45.6 843.1L45.8 841.3L46.1 840.8L46.4 841.5L46.7 843.4L47.0 846.2L47.3 849.6L47.6 852.9L47.9 855.7L48.2 857.6L48.5 858.4L48.7 857.8L49.0 856.1L49.3 853.4L49.6 850.3L49.9 847.2L50.2 844.5L50.5 842.8L50.8 842.3L51.1 843.1L51.4 845.0L51.6 847.9L51.9 851.2L52.2 854.5L52.5 857.3L52.8 859.2L53.1 859.9L53.4 859.2L53.7 857.5L54.0 854.8L54.3 851.7L54.5 848.5L54.8 845.9L55.1 844.3L55.4 843.8L55.7 844.6L56.0 846.6L56.3 849.4L56.6 852.8L56.9 856.1L57.2 858.8L57.4 860.7L57.7 861.3L58.0 860.6L58.3 858.8L58.6 856.1L58.9 853.0L59.2 849.8L59.5 847.3L59.8 845.6L60.1 845.2L60.3 846.0L60.6 848.1L60.9 850.9L61.2 854.3L61.5 857.5L61.8 860.3L62.1 862.1L62.4 862.6L62.7 861.9L63.0 860.1L63.2 857.4L63.5 854.2L63.8 851.1L64.1 848.5L64.4 846.9L64.7 846.5L65.0 847.4L65.3 849.5L65.6 852.4L65.9 855.7L66.1 858.9L66.4 861.7L66.7 863.4L67.0 863.9L67.3 863.2L67.6 861.3L67.9 858.5L68.2 855.3L68.5 852.2L68.8 849.7L69.0 848.1L69.3 847.8L69.6 848.7L69.9 850.8L70.2 853.7L70.5 857.0L70.8 860.3L71.1 862.9L71.4 864.6L71.7 865.1L72.0 864.3L72.2 862.4L72.5 859.6L72.8 856.4L73.1 853.3L73.4 850.8L73.7 849.3L74.0 849.0L74.3 849.9L74.6 852.0L74.9 855.0L75.1 858.3L75.4 861.5L75.7 864.2L76.0 865.8L76.3 866.2L76.6 865.4L76.9 863.4L77.2 860.6L77.5 857.4L77.8 854.3L78.0 851.8L78.3 850.3L78.6 850.0L78.9 851.0L79.2 853.2L79.5 856.1L79.8 859.5L80.1 862.7L80.4 865.3L80.7 866.9L80.9 867.3L81.2 866.4L81.5 864.4L81.8 861.5L82.1 858.3L82.4 855.2L82.7 852.8L83.0 851.3L83.3 851.0L83.6 852.1L83.8 854.2L84.1 857.2L84.4 860.5L84.7 863.7L85.0 866.3L85.3 867.9L85.6 868.2L85.9 867.3L86.2 865.2L86.5 862.3L86.7 859.1L87.0 856.1L87.3 853.6L87.6 852.2L87.9 852.0L88.2 853.0L88.5 855.2L88.8 858.2L89.1 861.5L89.4 864.7L89.6 867.2L89.9 868.8L90.2 869.1L90.5 868.1L90.8 866.0L91.1 863.1L91.4 859.8L91.7 856.8L92.0 854.4L92.3 853.0L92.5 852.8L92.8 853.9L93.1 856.1L93.4 859.1L93.7 862.4L94.0 865.6L94.3 868.1L94.6 869.6L94.9 869.8L95.2 868.8L95.4 866.6L95.7 863.7L96.0 860.5L96.3 857.4L96.6 855.0L96.9 853.6L97.2 853.5L97.5 854.7L97.8 856.9L98.1 859.9L98.3 863.2L98.6 866.4L98.9 868.8L99.2 870.3L99.5 870.4L99.8 869.4L100.1 867.2L100.4 864.2L100.7 861.0L101.0 857.9L101.2 855.6L101.5 854.2L101.8 854.1L102.1 855.3L102.4 857.6L102.7 860.6L103.0 863.9L103.3 867.0L103.6 869.5L103.9 870.9L104.1 871.0L104.4 869.9L104.7 867.6L105.0 864.7L105.3 861.4L105.6 858.4L105.9 856.0L106.2 854.7L106.5 854.7L106.8 855.9L107.0 858.2L107.3 861.2L107.6 864.5L107.9 867.6L108.2 870.0L108.5 871.4L108.8 871.4L109.1 870.3L109.4 868.0L109.7 865.0L109.9 861.7L110.2 858.7L110.5 856.4L110.8 855.1L111.1 855.1L111.4 856.4L111.7 858.7L112.0 861.7L112.3 865.0L112.6 868.1L112.8 870.5L113.1 871.7L113.4 871.8L113.7 870.6L114.0 868.3L114.3 865.2L114.6 862.0L114.9 859.0L115.2 856.7L115.5 855.4L115.7 855.4L116.0 856.7L116.3 859.1L116.6 862.1L116.9 865.4L117.2 868.5L117.5 870.8L117.8 872.0L118.1 872.0L118.4 870.7L118.6 868.4L118.9 865.4L119.2 862.1L119.5 859.1L119.8 856.8L120.1 855.6L120.4 855.7L120.7 857.0L121.0 859.4L121.3 862.4L121.5 865.7L121.8 868.7L122.1 871.0L122.4 872.2L122.7 872.1L123.0 870.8L123.3 868.4L123.6 865.4L123.9 862.1L124.2 859.1L124.4 856.9L124.7 855.7L125.0 855.8L125.3 857.2L125.6 859.6L125.9 862.6L126.2 865.9L126.5 868.9L126.8 871.1L127.1 872.3L127.3 872.2L127.6 870.8L127.9 868.4L128.2 865.3L128.5 862.0L128.8 859.0L129.1 856.8L129.4 855.7L129.7 855.8L130.0 857.2L130.2 859.6L130.5 862.7L130.8 866.0L131.1 869.0L131.4 871.2L131.7 872.3L132.0 872.1L132.3 870.7L132.6 868.2L132.9 865.1L133.1 861.8L133.4 858.9L133.7 856.7L134.0 855.6L134.3 855.7L134.6 857.2L134.9 859.6L135.2 862.7L135.5 866.0L135.8 868.9L136.0 871.1L136.3 872.1L136.6 871.9L136.9 870.4L137.2 868.0L137.5 864.8L137.8 861.5L138.1 858.6L138.4 856.4L138.7 855.4L138.9 855.6L139.2 857.0L139.5 859.5L139.8 862.6L140.1 865.9L140.4 868.8L140.7 870.9L141.0 871.9L141.3 871.6L141.6 870.1L141.8 867.6L142.1 864.4L142.4 861.1L142.7 858.2L143.0 856.0L143.3 855.0L143.6 855.3L143.9 856.8L144.2 859.3L144.5 862.4L144.7 865.6L145.0 868.5L145.3 870.6L145.6 871.5L145.9 871.2L146.2 869.7L146.5 867.1L146.8 863.9L147.1 860.6L147.4 857.7L147.6 855.6L147.9 854.6L148.2 854.9L148.5 856.4L148.8 858.9L149.1 862.1L149.4 865.3L149.7 868.1L150.0 870.2L150.3 871.1L150.5 870.7L150.8 869.1L151.1 866.5L151.4 863.3L151.7 860.0L152.0 857.1L152.3 855.0L152.6 854.1L152.9 854.4L153.2 856.0L153.4 858.5L153.7 861.6L154.0 864.9L154.3 867.7L154.6 869.7L154.9 870.5L155.2 870.1L155.5 868.5L155.8 865.8L156.1 862.6L156.3 859.3L156.6 856.4L156.9 854.4L157.2 853.5L157.5 853.8L157.8 855.4L158.1 858.0L158.4 861.1L158.7 864.3L159.0 867.1L159.2 869.1L159.5 869.9L159.8 869.4L160.1 867.7L160.4 865.1L160.7 861.8L161.0 858.5L161.3 855.6L161.6 853.6L161.9 852.7L162.1 853.2L162.4 854.8L162.7 857.4L163.0 860.5L163.3 863.7L163.6 866.5L163.9 868.4L164.2 869.1L164.5 868.6L164.8 866.9L165.0 864.2L165.3 860.9L165.6 857.6L165.9 854.8L166.2 852.8L166.5 851.9L166.8 852.4L167.1 854.0L167.4 856.6L167.7 859.8L167.9 863.0L168.2 865.7L168.5 867.6L168.8 868.3L169.1 867.7L169.4 865.9L169.7 863.2L170.0 859.9L170.3 856.6L170.6 853.8L170.8 851.8L171.1 851.0L171.4 851.5L171.7 853.2L172.0 855.8L172.3 859.0L172.6 862.1L172.9 864.9L173.2 866.7L173.4 867.3L173.7 866.7L174.0 864.9L174.3 862.1L174.6 858.9L174.9 855.6L175.2 852.7L175.5 850.8L175.8 850.0L176.1 850.6L176.3 852.3L176.6 854.9L176.9 858.1L177.2 861.2L177.5 863.9L177.8 865.7L178.1 866.3L178.4 865.6L178.7 863.8L179.0 861.0L179.2 857.7L179.5 854.4L179.8 851.6L180.1 849.7L180.4 849.0L180.7 849.5L181.0 851.3L181.3 853.9L181.6 857.1L181.9 860.2L182.1 862.9L182.4 864.6L182.7 865.2L183.0 864.5L183.3 862.5L183.6 859.7L183.9 856.4L184.2 853.1L184.5 850.3L184.8 848.5L185.0 847.8L185.3 848.4L185.6 850.2L185.9 852.8L186.2 856.0L186.5 859.1L186.8 861.8L187.1 863.5L187.4 864.0L187.7 863.2L187.9 861.2L188.2 858.4L188.5 855.1L188.8 851.8L189.1 849.0L189.4 847.2L189.7 846.5L190.0 847.2L190.3 849.0L190.6 851.7L190.8 854.8L191.1 858.0L191.4 860.6L191.7 862.2L192.0 862.7L192.3 861.9L192.6 859.9L192.9 857.0L193.2 853.7L193.5 850.4L193.7 847.6L194.0 845.8L194.3 845.2L194.6 845.9L194.9 847.7L195.2 850.5L195.5 853.6L195.8 856.7L196.1 859.3L196.4 860.9L196.6 861.3L196.9 860.4L197.2 858.4L197.5 855.5L197.8 852.2L198.1 848.9L198.4 846.2L198.7 844.4L199.0 843.8L199.3 844.5L199.5 846.4L199.8 849.2L200.1 852.3L200.4 855.4L200.7 857.9L201.0 859.5L201.3 859.9L201.6 859.0L201.9 856.9L202.2 854.0L202.4 850.6L202.7 847.3L203.0 844.6L203.3 842.9L203.6 842.4L203.9 843.1L204.2 845.0L204.5 847.8L204.8 850.9L205.1 854.0L205.3 856.5L205.6 858.1L205.9 858.4L206.2 857.4L206.5 855.3L206.8 852.3L207.1 849.0L207.4 845.7L207.7 843.0L208.0 841.3L208.2 840.8L208.5 841.6L208.8 843.6L209.1 846.3L209.4 849.5L209.7 852.6L210.0 855.0L210.3 856.5L210.6 856.8L210.9 855.8L211.1 853.6L211.4 850.6L211.7 847.3L212.0 844.0L212.3 841.4L212.6 839.7L212.9 839.2L213.2 840.1L213.5 842.0L213.8 844.8L214.0 848.0L214.3 851.0L214.6 853.5L214.9 854.9L215.2 855.2L215.5 854.1L215.8 851.9L216.1 848.9L216.4 845.5L216.7 842.3L216.9 839.6L217.2 838.0L217.5 837.6L217.8 838.5L218.1 840.5L218.4 843.3L218.7 846.4L219.0 849.5L219.3 851.9L219.6 853.3L219.8 853.5L220.1 852.4L220.4 850.1L220.7 847.1L221.0 843.7L221.3 840.5L221.6 837.9L221.9 836.3L222.2 835.9L222.5 836.8L222.7 838.9L223.0 841.7L223.3 844.8L223.6 847.9L223.9 850.2L224.2 851.6L224.5 851.7L224.8 850.6L225.1 848.3L225.4 845.2L225.6 841.9L225.9 838.6L226.2 836.1L226.5 834.5L226.8 834.2L227.1 835.1L227.4 837.2L227.7 840.0L228.0 843.2L228.3 846.2L228.5 848.5L228.8 849.8L229.1 849.9L229.4 848.7L229.7 846.4L230.0 843.4L230.3 840.0L230.6 836.8L230.9 834.2L231.2 832.7L231.4 832.4L231.7 833.4L232.0 835.5L232.3 838.3L232.6 841.5L232.9 844.5L233.2 846.8L233.5 848.1L233.8 848.1L234.1 846.9L234.3 844.5L234.6 841.4L234.9 838.0L235.2 834.8L235.5 832.3L235.8 830.8L236.1 830.6L236.4 831.6L236.7 833.7L237.0 836.6L237.2 839.8L237.5 842.7L237.8 845.0L238.1 846.2L238.4 846.2L238.7 844.9L239.0 842.6L239.3 839.5L239.6 836.1L239.9 832.9L240.1 830.4L240.4 828.9L240.7 828.7L241.0 829.8L241.3 832.0L241.6 834.8L241.9 838.0L242.2 840.9L242.5 843.2L242.8 844.4L243.0 844.3L243.3 843.0L243.6 840.6L243.9 837.5L244.2 834.1L244.5 830.9L244.8 828.4L245.1 827.0L245.4 826.9L245.7 828.0L245.9 830.2L246.2 833.1L246.5 836.2L246.8 839.1L247.1 841.4L247.4 842.5L247.7 842.4L248.0 841.0L248.3 838.6L248.6 835.4L248.8 832.0L249.1 828.9L249.4 826.4L249.7 825.1L250.0 825.0L250.3 826.1L250.6 828.3L250.9 831.3L251.2 834.4L251.5 837.3L251.7 839.5L252.0 840.6L252.3 840.5L252.6 839.1L252.9 836.6L253.2 833.4L253.5 830.0L253.8 826.9L254.1 824.5L254.4 823.1L254.6 823.1L254.9 824.3L255.2 826.5L255.5 829.4L255.8 832.6L256.1 835.5L256.4 837.6L256.7 838.7L257.0 838.5L257.3 837.1L257.5 834.6L257.8 831.4L258.1 828.0L258.4 824.8L258.7 822.5L259.0 821.2L259.3 821.2L259.6 822.4L259.9 824.7L260.2 827.6L260.4 830.8L260.7 833.6L261.0 835.8L261.3 836.8L261.6 836.5L261.9 835.0L262.2 832.5L262.5 829.3L262.8 825.9L263.1 822.8L263.3 820.5" stroke="#8e8e8e" stroke-width="1.5" fill="none" stroke-linejoin="round"/><defs><radialGradient id="pg" cx="0.35" cy="0.5" r="0.6"><stop offset="0" stop-color="#c4f7bc"/><stop offset="1" stop-color="#3cc43c"/></radialGradient></defs><path d="M231 978.5L247 988L231 997.5Z" fill="url(#pg)" stroke="#22b022" stroke-width="2" stroke-linejoin="round"/><path d="M2 1021.5V1024M14 1022V1024M31 1020V1024M44 1022.5V1024M58 1022.5V1024M67 1020V1024M76 1022.5V1024" stroke="#222" stroke-width="1.4"/></svg></body></html>
